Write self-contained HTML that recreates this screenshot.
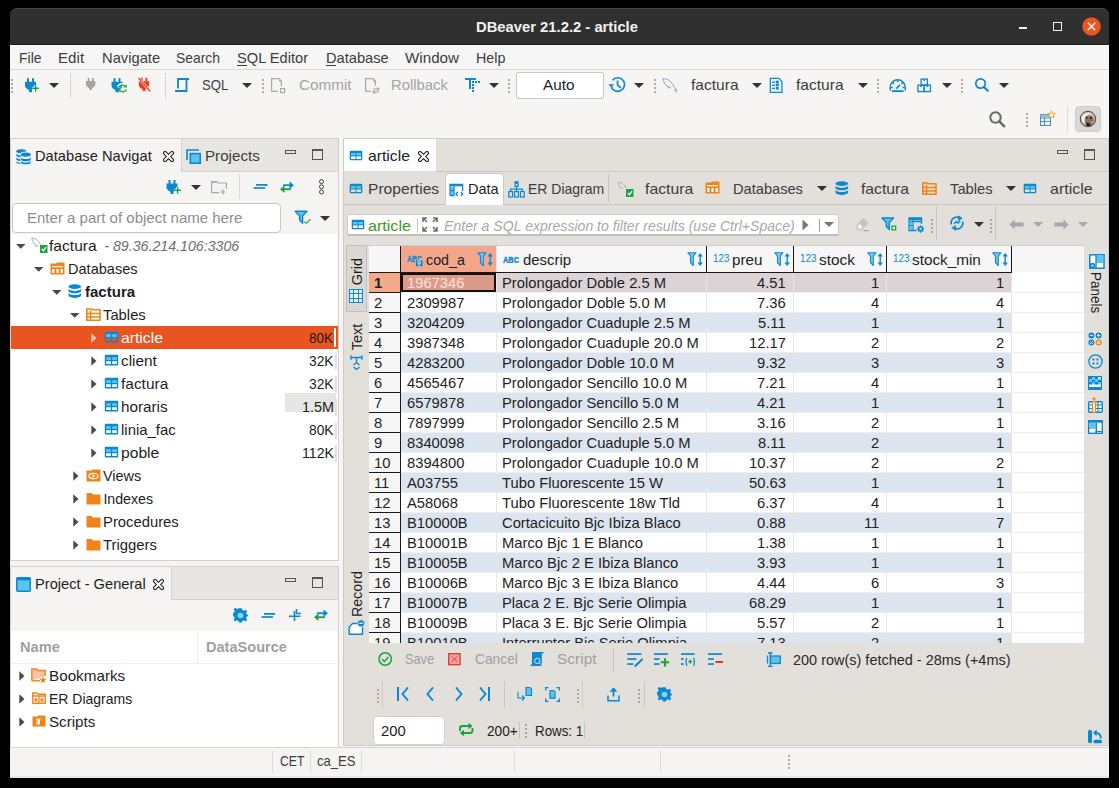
<!DOCTYPE html>
<html><head><meta charset="utf-8"><title>DBeaver</title>
<style>
html,body{margin:0;padding:0;}
body{width:1119px;height:788px;background:#000;position:relative;overflow:hidden;font-family:"Liberation Sans",sans-serif;}
.a{position:absolute;}
.t{position:absolute;white-space:nowrap;line-height:0;transform-origin:0 0;}
</style></head><body>
<div class="a" style="left:10px;top:44px;width:1099px;height:734px;background:#f6f5f4;"></div>
<div class="a" style="left:10px;top:8px;width:1099px;height:37px;background:#313030;border-radius:7px 7px 0 0;border-top:1px solid #4a4a4a;box-sizing:border-box;"></div>
<div class="a" style="left:10px;top:44px;width:1099px;height:1px;background:#1c1c1c;"></div>
<div class="a" style="left:10px;top:45px;width:1099px;height:1px;background:#ffffff;"></div>
<div class="t" style="left:475.70px;top:26.88px;font-size:14.2px;color:#f2f2f2;font-weight:bold;transform:scaleX(1.0424);">DBeaver 21.2.2 - article</div>
<div class="a" style="left:1019px;top:27px;width:8px;height:2px;background:#f0f0f0;"></div>
<div class="a" style="left:1053px;top:22px;width:8px;height:8px;background:transparent;border:1.5px solid #f0f0f0;box-sizing:border-box;width:9px;height:9px;"></div>
<svg class="a" style="left:1082px;top:17px;" width="19" height="19" viewBox="0 0 19 19"><circle cx="9.5" cy="9.5" r="9.3" fill="#e95420"/><path d="M5.8 5.8L13.2 13.2M13.2 5.8L5.8 13.2" stroke="#fff" stroke-width="1.4"/></svg>
<div class="a" style="left:10px;top:46px;width:1099px;height:23px;background:#f6f6f6;"></div>
<div class="a" style="left:10px;top:69px;width:1099px;height:1px;background:#dad9d7;"></div>
<div class="t" style="left:18.80px;top:58.08px;font-size:14.2px;color:#3d3d3d;transform:scaleX(0.9879);">File</div>
<div class="t" style="left:58.30px;top:58.08px;font-size:14.2px;color:#3d3d3d;transform:scaleX(1.0668);">Edit</div>
<div class="t" style="left:101.80px;top:58.08px;font-size:14.2px;color:#3d3d3d;transform:scaleX(1.0384);">Navigate</div>
<div class="t" style="left:176.30px;top:58.08px;font-size:14.2px;color:#3d3d3d;transform:scaleX(0.9781);">Search</div>
<div class="t" style="left:236.50px;top:58.08px;font-size:14.2px;color:#3d3d3d;transform:scaleX(1.0315);">SQL Editor</div>
<div class="a" style="left:237px;top:65px;width:10px;height:1px;background:#3d3d3d;"></div>
<div class="t" style="left:325.50px;top:58.08px;font-size:14.2px;color:#3d3d3d;transform:scaleX(1.0331);">Database</div>
<div class="a" style="left:326px;top:65px;width:10px;height:1px;background:#3d3d3d;"></div>
<div class="t" style="left:405.30px;top:58.08px;font-size:14.2px;color:#3d3d3d;transform:scaleX(1.0705);">Window</div>
<div class="t" style="left:475.70px;top:58.08px;font-size:14.2px;color:#3d3d3d;transform:scaleX(1.0065);">Help</div>
<div class="a" style="left:10px;top:70px;width:1099px;height:68px;background:#f6f5f4;"></div>
<div class="t" style="left:201.90px;top:85.48px;font-size:14.2px;color:#3d3d3d;transform:scaleX(0.9256);">SQL</div>
<div class="t" style="left:298.70px;top:85.48px;font-size:14.2px;color:#a3a3a3;transform:scaleX(1.0756);">Commit</div>
<div class="t" style="left:391.40px;top:85.48px;font-size:14.2px;color:#a3a3a3;transform:scaleX(1.0443);">Rollback</div>
<div class="a" style="left:516px;top:72px;width:88px;height:27px;background:#ffffff;border:1px solid #c9c6c3;box-sizing:border-box;border-radius:2px;"></div>
<div class="t" style="left:542.50px;top:85.48px;font-size:14.2px;color:#1e1e1e;transform:scaleX(1.0750);">Auto</div>
<div class="t" style="left:690.60px;top:85.48px;font-size:14.2px;color:#3d3d3d;transform:scaleX(1.0985);">factura</div>
<div class="t" style="left:796.30px;top:85.48px;font-size:14.2px;color:#3d3d3d;transform:scaleX(1.0985);">factura</div>
<div class="a" style="left:10px;top:138px;width:329px;height:423px;background:#f5f4f2;border:1px solid #d5d0cb;box-sizing:border-box;"></div>
<div class="a" style="left:181px;top:139px;width:157px;height:32px;background:#e8e6e3;"></div>
<div class="a" style="left:181px;top:171px;width:157px;height:1px;background:#d5d0cb;"></div>
<div class="a" style="left:181px;top:139px;width:1px;height:32px;background:#d5d0cb;"></div>
<div class="t" style="left:35.40px;top:156.48px;font-size:14.2px;color:#1e1e1e;transform:scaleX(1.0348);">Database Navigat</div>
<div class="t" style="left:205.20px;top:156.48px;font-size:14.2px;color:#3d3d3d;transform:scaleX(1.0684);">Projects</div>
<div class="a" style="left:12px;top:203px;width:269px;height:30px;background:#ffffff;border:1px solid #cdc7c2;box-sizing:border-box;border-radius:4px;"></div>
<div class="t" style="left:26.50px;top:218.08px;font-size:14.2px;color:#8d8d8d;transform:scaleX(1.0582);">Enter a part of object name here</div>
<div class="a" style="left:11px;top:234px;width:327px;height:326px;background:#ffffff;"></div>
<div class="t" style="left:49.00px;top:245.58px;font-size:14.2px;color:#1e1e1e;transform:scaleX(1.1008);">factura</div>
<div class="t" style="left:104.30px;top:245.58px;font-size:14.2px;color:#6e6e6e;font-style:italic;">- 89.36.214.106:3306</div>
<div class="t" style="left:67.50px;top:268.58px;font-size:14.2px;color:#1e1e1e;transform:scaleX(1.0267);">Databases</div>
<div class="t" style="left:85.40px;top:291.58px;font-size:14.2px;color:#1e1e1e;font-weight:bold;transform:scaleX(1.0602);">factura</div>
<div class="t" style="left:103.40px;top:314.58px;font-size:14.2px;color:#1e1e1e;transform:scaleX(1.0426);">Tables</div>
<div class="a" style="left:11px;top:326px;width:327px;height:23px;background:#e95420;"></div>
<div class="t" style="left:121.40px;top:337.58px;font-size:14.2px;color:#ffffff;transform:scaleX(1.1060);">article</div>
<div class="t" style="left:309.40px;top:337.58px;font-size:14.2px;color:#1e1e1e;transform:scaleX(0.9501);">80K</div>
<div class="t" style="left:121.40px;top:360.58px;font-size:14.2px;color:#1e1e1e;transform:scaleX(1.0832);">client</div>
<div class="t" style="left:309.40px;top:360.58px;font-size:14.2px;color:#1e1e1e;transform:scaleX(0.9738);">32K</div>
<div class="t" style="left:121.40px;top:383.58px;font-size:14.2px;color:#1e1e1e;transform:scaleX(1.0893);">factura</div>
<div class="t" style="left:309.40px;top:383.58px;font-size:14.2px;color:#1e1e1e;transform:scaleX(0.9738);">32K</div>
<div class="a" style="left:285px;top:392.5px;width:51px;height:19px;background:#e8e6e4;"></div>
<div class="t" style="left:121.40px;top:406.58px;font-size:14.2px;color:#1e1e1e;transform:scaleX(1.0735);">horaris</div>
<div class="t" style="left:302.00px;top:406.58px;font-size:14.2px;color:#1e1e1e;transform:scaleX(1.0137);">1.5M</div>
<div class="t" style="left:121.40px;top:429.58px;font-size:14.2px;color:#1e1e1e;transform:scaleX(1.0518);">linia_fac</div>
<div class="t" style="left:309.40px;top:429.58px;font-size:14.2px;color:#1e1e1e;transform:scaleX(0.9738);">80K</div>
<div class="t" style="left:121.40px;top:452.58px;font-size:14.2px;color:#1e1e1e;transform:scaleX(1.1022);">poble</div>
<div class="t" style="left:302.00px;top:452.58px;font-size:14.2px;color:#1e1e1e;transform:scaleX(0.9967);">112K</div>
<div class="t" style="left:103.40px;top:475.58px;font-size:14.2px;color:#1e1e1e;transform:scaleX(1.0182);">Views</div>
<div class="t" style="left:103.40px;top:498.58px;font-size:14.2px;color:#1e1e1e;">Indexes</div>
<div class="t" style="left:103.40px;top:521.58px;font-size:14.2px;color:#1e1e1e;transform:scaleX(1.0438);">Procedures</div>
<div class="t" style="left:103.40px;top:544.58px;font-size:14.2px;color:#1e1e1e;transform:scaleX(1.0457);">Triggers</div>
<div class="a" style="left:10px;top:566px;width:329px;height:182px;background:#f5f4f2;border:1px solid #d5d0cb;box-sizing:border-box;"></div>
<div class="a" style="left:171px;top:567px;width:167px;height:32px;background:#e8e6e3;"></div>
<div class="a" style="left:171px;top:599px;width:167px;height:1px;background:#d5d0cb;"></div>
<div class="a" style="left:171px;top:567px;width:1px;height:32px;background:#d5d0cb;"></div>
<div class="t" style="left:35.40px;top:584.48px;font-size:14.2px;color:#1e1e1e;transform:scaleX(1.0323);">Project - General</div>
<div class="a" style="left:11px;top:631px;width:327px;height:116px;background:#ffffff;"></div>
<div class="a" style="left:11px;top:663px;width:327px;height:1px;background:#efefef;"></div>
<div class="a" style="left:197px;top:631px;width:1px;height:32px;background:#efefef;"></div>
<div class="t" style="left:19.60px;top:646.78px;font-size:14.2px;color:#a0a0a0;font-weight:bold;transform:scaleX(1.0289);">Name</div>
<div class="t" style="left:206.00px;top:646.78px;font-size:14.2px;color:#a0a0a0;font-weight:bold;transform:scaleX(1.0263);">DataSource</div>
<div class="t" style="left:49.00px;top:676.08px;font-size:14.2px;color:#1e1e1e;transform:scaleX(1.0742);">Bookmarks</div>
<div class="t" style="left:49.00px;top:699.08px;font-size:14.2px;color:#1e1e1e;transform:scaleX(0.9854);">ER Diagrams</div>
<div class="t" style="left:49.00px;top:722.08px;font-size:14.2px;color:#1e1e1e;transform:scaleX(1.0669);">Scripts</div>
<div class="a" style="left:10px;top:747px;width:1099px;height:31px;background:#f5f4f2;"></div>
<div class="a" style="left:10px;top:747px;width:1099px;height:1px;background:#d8d3cf;"></div>
<div class="a" style="left:10px;top:776px;width:1099px;height:2px;background:#e9e6e3;"></div>
<div class="a" style="left:272px;top:751px;width:1px;height:22px;background:#dedad6;"></div>
<div class="a" style="left:310px;top:751px;width:1px;height:22px;background:#dedad6;"></div>
<div class="a" style="left:361px;top:751px;width:1px;height:22px;background:#dedad6;"></div>
<div class="a" style="left:514px;top:751px;width:1px;height:22px;background:#dedad6;"></div>
<div class="a" style="left:660px;top:751px;width:1px;height:22px;background:#dedad6;"></div>
<div class="a" style="left:788px;top:755px;width:2px;height:2px;background:#b3aba2;"></div>
<div class="a" style="left:788px;top:759px;width:2px;height:2px;background:#b3aba2;"></div>
<div class="a" style="left:788px;top:763px;width:2px;height:2px;background:#b3aba2;"></div>
<div class="a" style="left:788px;top:767px;width:2px;height:2px;background:#b3aba2;"></div>
<div class="t" style="left:279.50px;top:761.08px;font-size:14.2px;color:#3d3d3d;transform:scaleX(0.8627);">CET</div>
<div class="t" style="left:316.50px;top:761.08px;font-size:14.2px;color:#3d3d3d;transform:scaleX(0.9203);">ca_ES</div>
<div class="a" style="left:343px;top:138px;width:766px;height:608px;background:#e3dfdb;border:1px solid #d0cbc6;box-sizing:border-box;"></div>
<div class="a" style="left:344px;top:139px;width:92px;height:32px;background:#ffffff;"></div>
<div class="a" style="left:436px;top:171px;width:672px;height:1px;background:#cdc8c3;"></div>
<div class="t" style="left:368.00px;top:156.48px;font-size:14.2px;color:#1e1e1e;transform:scaleX(1.1086);">article</div>
<div class="a" style="left:344px;top:204px;width:764px;height:1px;background:#c9c4bf;"></div>
<div class="a" style="left:444.5px;top:172.5px;width:59px;height:32px;background:#ffffff;border:1px solid #cdc8c3;border-bottom:none;border-radius:4px 4px 0 0;box-sizing:border-box;"></div>
<div class="a" style="left:608px;top:174px;width:1px;height:28px;background:#c9c4bf;"></div>
<div class="t" style="left:368.00px;top:189.28px;font-size:14.2px;color:#3d3d3d;transform:scaleX(1.1001);">Properties</div>
<div class="t" style="left:468.00px;top:189.28px;font-size:14.2px;color:#1e1e1e;transform:scaleX(1.0232);">Data</div>
<div class="t" style="left:527.70px;top:189.28px;font-size:14.2px;color:#3d3d3d;transform:scaleX(0.9866);">ER Diagram</div>
<div class="t" style="left:645.00px;top:189.28px;font-size:14.2px;color:#3d3d3d;transform:scaleX(1.1123);">factura</div>
<div class="t" style="left:733.40px;top:189.28px;font-size:14.2px;color:#3d3d3d;transform:scaleX(1.0311);">Databases</div>
<div class="t" style="left:861.20px;top:189.28px;font-size:14.2px;color:#3d3d3d;transform:scaleX(1.1077);">factura</div>
<div class="t" style="left:949.50px;top:189.28px;font-size:14.2px;color:#3d3d3d;transform:scaleX(1.0401);">Tables</div>
<div class="t" style="left:1050.30px;top:189.28px;font-size:14.2px;color:#3d3d3d;transform:scaleX(1.1271);">article</div>
<div class="a" style="left:347px;top:214px;width:492px;height:22px;background:#ffffff;border:1px solid #d2cdc8;border-bottom:2px solid #c3beb9;box-sizing:border-box;"></div>
<div class="t" style="left:368.00px;top:226.08px;font-size:14.2px;color:#3b9a1d;transform:scaleX(1.1350);">article</div>
<div class="a" style="left:417px;top:219px;width:1px;height:14px;background:#c9c4bf;"></div>
<div class="t" style="left:444.00px;top:226.08px;font-size:14.2px;color:#a9a9a9;font-style:italic;transform:scaleX(0.9923);">Enter a SQL expression to filter results (use Ctrl+Space)</div>
<div class="a" style="left:819px;top:219px;width:1px;height:13px;background:#a0a0a0;"></div>
<div class="a" style="left:369px;top:245px;width:715px;height:398px;background:#ffffff;"></div>
<div class="a" style="left:369px;top:245px;width:715px;height:27px;background:#f6f6f6;"></div>
<div class="a" style="left:369px;top:245px;width:715px;height:1px;background:#cfcfcf;"></div>
<div class="a" style="left:401px;top:246px;width:95px;height:26px;background:#f2a68c;"></div>
<div class="a" style="left:369px;top:272px;width:642px;height:1px;background:#1a1a1a;"></div>
<div class="a" style="left:400px;top:246px;width:1px;height:27px;background:#1a1a1a;"></div>
<div class="a" style="left:706px;top:246px;width:1px;height:27px;background:#1a1a1a;"></div>
<div class="a" style="left:793px;top:246px;width:1px;height:27px;background:#1a1a1a;"></div>
<div class="a" style="left:886px;top:246px;width:1px;height:27px;background:#1a1a1a;"></div>
<div class="a" style="left:1011px;top:246px;width:1px;height:27px;background:#1a1a1a;"></div>
<div class="a" style="left:496px;top:246px;width:1px;height:26px;background:#e2e2e2;"></div>
<div class="t" style="left:426.30px;top:260.08px;font-size:14.2px;color:#1e1e1e;transform:scaleX(1.0079);">cod_a</div>
<div class="t" style="left:522.70px;top:260.08px;font-size:14.2px;color:#1e1e1e;transform:scaleX(1.0528);">descrip</div>
<div class="t" style="left:732.40px;top:260.08px;font-size:14.2px;color:#1e1e1e;transform:scaleX(1.0734);">preu</div>
<div class="t" style="left:819.00px;top:260.08px;font-size:14.2px;color:#1e1e1e;transform:scaleX(1.0823);">stock</div>
<div class="t" style="left:912.00px;top:260.08px;font-size:14.2px;color:#1e1e1e;transform:scaleX(1.0780);">stock_min</div>
<div class="a" style="left:369px;top:273px;width:715px;height:370px;overflow:hidden">
<div class="a" style="left:0px;top:0px;width:31px;height:19px;background:#f4a98b;"></div>
<div class="a" style="left:32px;top:0px;width:95px;height:19px;background:#dc9a8a;"></div>
<div class="a" style="left:128px;top:0px;width:514px;height:19px;background:#dcd3d6;"></div>
<div class="a" style="left:0px;top:19px;width:31px;height:1px;background:#1a1a1a;"></div>
<div class="a" style="left:32px;top:19px;width:611px;height:1px;background:#efefef;"></div>
<div class="a" style="left:642px;top:19px;width:73px;height:1px;background:#ececec;"></div>
<div class="a" style="left:127px;top:0px;width:1px;height:20px;background:#e6e6e6;"></div>
<div class="a" style="left:337px;top:0px;width:1px;height:20px;background:#e6e6e6;"></div>
<div class="a" style="left:424px;top:0px;width:1px;height:20px;background:#e6e6e6;"></div>
<div class="a" style="left:517px;top:0px;width:1px;height:20px;background:#e6e6e6;"></div>
<div class="a" style="left:642px;top:0px;width:1px;height:20px;background:#e6e6e6;"></div>
<div class="a" style="left:31px;top:0px;width:1px;height:20px;background:#1a1a1a;"></div>
<div class="t" style="left:4.60px;top:9.58px;font-size:14.2px;color:#1e1e1e;font-weight:bold;transform:scaleX(1.0400);">1</div>
<div class="t" style="left:37.50px;top:9.58px;font-size:14.2px;color:#fbe3d8;transform:scaleX(1.0400);">1967346</div>
<div class="t" style="left:133.30px;top:9.58px;font-size:14.2px;color:#1e1e1e;transform:scaleX(1.0400);">Prolongador Doble 2.5 M</div>
<div class="t" style="left:388.26px;top:9.58px;font-size:14.2px;color:#1e1e1e;transform:scaleX(1.0400);">4.51</div>
<div class="t" style="left:501.79px;top:9.58px;font-size:14.2px;color:#1e1e1e;transform:scaleX(1.0400);">1</div>
<div class="t" style="left:627.29px;top:9.58px;font-size:14.2px;color:#1e1e1e;transform:scaleX(1.0400);">1</div>
<div class="a" style="left:0px;top:20px;width:31px;height:19px;background:#f6f6f6;"></div>
<div class="a" style="left:0px;top:39px;width:31px;height:1px;background:#1a1a1a;"></div>
<div class="a" style="left:32px;top:39px;width:611px;height:1px;background:#efefef;"></div>
<div class="a" style="left:642px;top:39px;width:73px;height:1px;background:#ececec;"></div>
<div class="a" style="left:127px;top:20px;width:1px;height:20px;background:#e6e6e6;"></div>
<div class="a" style="left:337px;top:20px;width:1px;height:20px;background:#e6e6e6;"></div>
<div class="a" style="left:424px;top:20px;width:1px;height:20px;background:#e6e6e6;"></div>
<div class="a" style="left:517px;top:20px;width:1px;height:20px;background:#e6e6e6;"></div>
<div class="a" style="left:642px;top:20px;width:1px;height:20px;background:#e6e6e6;"></div>
<div class="a" style="left:31px;top:20px;width:1px;height:20px;background:#1a1a1a;"></div>
<div class="t" style="left:4.60px;top:29.58px;font-size:14.2px;color:#1e1e1e;transform:scaleX(1.0400);">2</div>
<div class="t" style="left:37.50px;top:29.58px;font-size:14.2px;color:#1e1e1e;transform:scaleX(1.0400);">2309987</div>
<div class="t" style="left:133.30px;top:29.58px;font-size:14.2px;color:#1e1e1e;transform:scaleX(1.0400);">Prolongador Doble 5.0 M</div>
<div class="t" style="left:388.26px;top:29.58px;font-size:14.2px;color:#1e1e1e;transform:scaleX(1.0400);">7.36</div>
<div class="t" style="left:501.79px;top:29.58px;font-size:14.2px;color:#1e1e1e;transform:scaleX(1.0400);">4</div>
<div class="t" style="left:627.29px;top:29.58px;font-size:14.2px;color:#1e1e1e;transform:scaleX(1.0400);">4</div>
<div class="a" style="left:32px;top:40px;width:610px;height:19px;background:#dce4ef;"></div>
<div class="a" style="left:0px;top:40px;width:31px;height:19px;background:#f6f6f6;"></div>
<div class="a" style="left:0px;top:59px;width:31px;height:1px;background:#1a1a1a;"></div>
<div class="a" style="left:32px;top:59px;width:611px;height:1px;background:#efefef;"></div>
<div class="a" style="left:642px;top:59px;width:73px;height:1px;background:#ececec;"></div>
<div class="a" style="left:127px;top:40px;width:1px;height:20px;background:#e6e6e6;"></div>
<div class="a" style="left:337px;top:40px;width:1px;height:20px;background:#e6e6e6;"></div>
<div class="a" style="left:424px;top:40px;width:1px;height:20px;background:#e6e6e6;"></div>
<div class="a" style="left:517px;top:40px;width:1px;height:20px;background:#e6e6e6;"></div>
<div class="a" style="left:642px;top:40px;width:1px;height:20px;background:#e6e6e6;"></div>
<div class="a" style="left:31px;top:40px;width:1px;height:20px;background:#1a1a1a;"></div>
<div class="t" style="left:4.60px;top:49.58px;font-size:14.2px;color:#1e1e1e;transform:scaleX(1.0400);">3</div>
<div class="t" style="left:37.50px;top:49.58px;font-size:14.2px;color:#1e1e1e;transform:scaleX(1.0400);">3204209</div>
<div class="t" style="left:133.30px;top:49.58px;font-size:14.2px;color:#1e1e1e;transform:scaleX(1.0400);">Prolongador Cuaduple 2.5 M</div>
<div class="t" style="left:389.35px;top:49.58px;font-size:14.2px;color:#1e1e1e;transform:scaleX(1.0400);">5.11</div>
<div class="t" style="left:501.79px;top:49.58px;font-size:14.2px;color:#1e1e1e;transform:scaleX(1.0400);">1</div>
<div class="t" style="left:627.29px;top:49.58px;font-size:14.2px;color:#1e1e1e;transform:scaleX(1.0400);">1</div>
<div class="a" style="left:0px;top:60px;width:31px;height:19px;background:#f6f6f6;"></div>
<div class="a" style="left:0px;top:79px;width:31px;height:1px;background:#1a1a1a;"></div>
<div class="a" style="left:32px;top:79px;width:611px;height:1px;background:#efefef;"></div>
<div class="a" style="left:642px;top:79px;width:73px;height:1px;background:#ececec;"></div>
<div class="a" style="left:127px;top:60px;width:1px;height:20px;background:#e6e6e6;"></div>
<div class="a" style="left:337px;top:60px;width:1px;height:20px;background:#e6e6e6;"></div>
<div class="a" style="left:424px;top:60px;width:1px;height:20px;background:#e6e6e6;"></div>
<div class="a" style="left:517px;top:60px;width:1px;height:20px;background:#e6e6e6;"></div>
<div class="a" style="left:642px;top:60px;width:1px;height:20px;background:#e6e6e6;"></div>
<div class="a" style="left:31px;top:60px;width:1px;height:20px;background:#1a1a1a;"></div>
<div class="t" style="left:4.60px;top:69.58px;font-size:14.2px;color:#1e1e1e;transform:scaleX(1.0400);">4</div>
<div class="t" style="left:37.50px;top:69.58px;font-size:14.2px;color:#1e1e1e;transform:scaleX(1.0400);">3987348</div>
<div class="t" style="left:133.30px;top:69.58px;font-size:14.2px;color:#1e1e1e;transform:scaleX(1.0400);">Prolongador Cuaduple 20.0 M</div>
<div class="t" style="left:380.05px;top:69.58px;font-size:14.2px;color:#1e1e1e;transform:scaleX(1.0400);">12.17</div>
<div class="t" style="left:501.79px;top:69.58px;font-size:14.2px;color:#1e1e1e;transform:scaleX(1.0400);">2</div>
<div class="t" style="left:627.29px;top:69.58px;font-size:14.2px;color:#1e1e1e;transform:scaleX(1.0400);">2</div>
<div class="a" style="left:32px;top:80px;width:610px;height:19px;background:#dce4ef;"></div>
<div class="a" style="left:0px;top:80px;width:31px;height:19px;background:#f6f6f6;"></div>
<div class="a" style="left:0px;top:99px;width:31px;height:1px;background:#1a1a1a;"></div>
<div class="a" style="left:32px;top:99px;width:611px;height:1px;background:#efefef;"></div>
<div class="a" style="left:642px;top:99px;width:73px;height:1px;background:#ececec;"></div>
<div class="a" style="left:127px;top:80px;width:1px;height:20px;background:#e6e6e6;"></div>
<div class="a" style="left:337px;top:80px;width:1px;height:20px;background:#e6e6e6;"></div>
<div class="a" style="left:424px;top:80px;width:1px;height:20px;background:#e6e6e6;"></div>
<div class="a" style="left:517px;top:80px;width:1px;height:20px;background:#e6e6e6;"></div>
<div class="a" style="left:642px;top:80px;width:1px;height:20px;background:#e6e6e6;"></div>
<div class="a" style="left:31px;top:80px;width:1px;height:20px;background:#1a1a1a;"></div>
<div class="t" style="left:4.60px;top:89.58px;font-size:14.2px;color:#1e1e1e;transform:scaleX(1.0400);">5</div>
<div class="t" style="left:37.50px;top:89.58px;font-size:14.2px;color:#1e1e1e;transform:scaleX(1.0400);">4283200</div>
<div class="t" style="left:133.30px;top:89.58px;font-size:14.2px;color:#1e1e1e;transform:scaleX(1.0400);">Prolongador Doble 10.0 M</div>
<div class="t" style="left:388.26px;top:89.58px;font-size:14.2px;color:#1e1e1e;transform:scaleX(1.0400);">9.32</div>
<div class="t" style="left:501.79px;top:89.58px;font-size:14.2px;color:#1e1e1e;transform:scaleX(1.0400);">3</div>
<div class="t" style="left:627.29px;top:89.58px;font-size:14.2px;color:#1e1e1e;transform:scaleX(1.0400);">3</div>
<div class="a" style="left:0px;top:100px;width:31px;height:19px;background:#f6f6f6;"></div>
<div class="a" style="left:0px;top:119px;width:31px;height:1px;background:#1a1a1a;"></div>
<div class="a" style="left:32px;top:119px;width:611px;height:1px;background:#efefef;"></div>
<div class="a" style="left:642px;top:119px;width:73px;height:1px;background:#ececec;"></div>
<div class="a" style="left:127px;top:100px;width:1px;height:20px;background:#e6e6e6;"></div>
<div class="a" style="left:337px;top:100px;width:1px;height:20px;background:#e6e6e6;"></div>
<div class="a" style="left:424px;top:100px;width:1px;height:20px;background:#e6e6e6;"></div>
<div class="a" style="left:517px;top:100px;width:1px;height:20px;background:#e6e6e6;"></div>
<div class="a" style="left:642px;top:100px;width:1px;height:20px;background:#e6e6e6;"></div>
<div class="a" style="left:31px;top:100px;width:1px;height:20px;background:#1a1a1a;"></div>
<div class="t" style="left:4.60px;top:109.58px;font-size:14.2px;color:#1e1e1e;transform:scaleX(1.0400);">6</div>
<div class="t" style="left:37.50px;top:109.58px;font-size:14.2px;color:#1e1e1e;transform:scaleX(1.0400);">4565467</div>
<div class="t" style="left:133.30px;top:109.58px;font-size:14.2px;color:#1e1e1e;transform:scaleX(1.0400);">Prolongador Sencillo 10.0 M</div>
<div class="t" style="left:388.26px;top:109.58px;font-size:14.2px;color:#1e1e1e;transform:scaleX(1.0400);">7.21</div>
<div class="t" style="left:501.79px;top:109.58px;font-size:14.2px;color:#1e1e1e;transform:scaleX(1.0400);">4</div>
<div class="t" style="left:627.29px;top:109.58px;font-size:14.2px;color:#1e1e1e;transform:scaleX(1.0400);">1</div>
<div class="a" style="left:32px;top:120px;width:610px;height:19px;background:#dce4ef;"></div>
<div class="a" style="left:0px;top:120px;width:31px;height:19px;background:#f6f6f6;"></div>
<div class="a" style="left:0px;top:139px;width:31px;height:1px;background:#1a1a1a;"></div>
<div class="a" style="left:32px;top:139px;width:611px;height:1px;background:#efefef;"></div>
<div class="a" style="left:642px;top:139px;width:73px;height:1px;background:#ececec;"></div>
<div class="a" style="left:127px;top:120px;width:1px;height:20px;background:#e6e6e6;"></div>
<div class="a" style="left:337px;top:120px;width:1px;height:20px;background:#e6e6e6;"></div>
<div class="a" style="left:424px;top:120px;width:1px;height:20px;background:#e6e6e6;"></div>
<div class="a" style="left:517px;top:120px;width:1px;height:20px;background:#e6e6e6;"></div>
<div class="a" style="left:642px;top:120px;width:1px;height:20px;background:#e6e6e6;"></div>
<div class="a" style="left:31px;top:120px;width:1px;height:20px;background:#1a1a1a;"></div>
<div class="t" style="left:4.60px;top:129.58px;font-size:14.2px;color:#1e1e1e;transform:scaleX(1.0400);">7</div>
<div class="t" style="left:37.50px;top:129.58px;font-size:14.2px;color:#1e1e1e;transform:scaleX(1.0400);">6579878</div>
<div class="t" style="left:133.30px;top:129.58px;font-size:14.2px;color:#1e1e1e;transform:scaleX(1.0400);">Prolongador Sencillo 5.0 M</div>
<div class="t" style="left:388.26px;top:129.58px;font-size:14.2px;color:#1e1e1e;transform:scaleX(1.0400);">4.21</div>
<div class="t" style="left:501.79px;top:129.58px;font-size:14.2px;color:#1e1e1e;transform:scaleX(1.0400);">1</div>
<div class="t" style="left:627.29px;top:129.58px;font-size:14.2px;color:#1e1e1e;transform:scaleX(1.0400);">1</div>
<div class="a" style="left:0px;top:140px;width:31px;height:19px;background:#f6f6f6;"></div>
<div class="a" style="left:0px;top:159px;width:31px;height:1px;background:#1a1a1a;"></div>
<div class="a" style="left:32px;top:159px;width:611px;height:1px;background:#efefef;"></div>
<div class="a" style="left:642px;top:159px;width:73px;height:1px;background:#ececec;"></div>
<div class="a" style="left:127px;top:140px;width:1px;height:20px;background:#e6e6e6;"></div>
<div class="a" style="left:337px;top:140px;width:1px;height:20px;background:#e6e6e6;"></div>
<div class="a" style="left:424px;top:140px;width:1px;height:20px;background:#e6e6e6;"></div>
<div class="a" style="left:517px;top:140px;width:1px;height:20px;background:#e6e6e6;"></div>
<div class="a" style="left:642px;top:140px;width:1px;height:20px;background:#e6e6e6;"></div>
<div class="a" style="left:31px;top:140px;width:1px;height:20px;background:#1a1a1a;"></div>
<div class="t" style="left:4.60px;top:149.58px;font-size:14.2px;color:#1e1e1e;transform:scaleX(1.0400);">8</div>
<div class="t" style="left:37.50px;top:149.58px;font-size:14.2px;color:#1e1e1e;transform:scaleX(1.0400);">7897999</div>
<div class="t" style="left:133.30px;top:149.58px;font-size:14.2px;color:#1e1e1e;transform:scaleX(1.0400);">Prolongador Sencillo 2.5 M</div>
<div class="t" style="left:388.26px;top:149.58px;font-size:14.2px;color:#1e1e1e;transform:scaleX(1.0400);">3.16</div>
<div class="t" style="left:501.79px;top:149.58px;font-size:14.2px;color:#1e1e1e;transform:scaleX(1.0400);">2</div>
<div class="t" style="left:627.29px;top:149.58px;font-size:14.2px;color:#1e1e1e;transform:scaleX(1.0400);">1</div>
<div class="a" style="left:32px;top:160px;width:610px;height:19px;background:#dce4ef;"></div>
<div class="a" style="left:0px;top:160px;width:31px;height:19px;background:#f6f6f6;"></div>
<div class="a" style="left:0px;top:179px;width:31px;height:1px;background:#1a1a1a;"></div>
<div class="a" style="left:32px;top:179px;width:611px;height:1px;background:#efefef;"></div>
<div class="a" style="left:642px;top:179px;width:73px;height:1px;background:#ececec;"></div>
<div class="a" style="left:127px;top:160px;width:1px;height:20px;background:#e6e6e6;"></div>
<div class="a" style="left:337px;top:160px;width:1px;height:20px;background:#e6e6e6;"></div>
<div class="a" style="left:424px;top:160px;width:1px;height:20px;background:#e6e6e6;"></div>
<div class="a" style="left:517px;top:160px;width:1px;height:20px;background:#e6e6e6;"></div>
<div class="a" style="left:642px;top:160px;width:1px;height:20px;background:#e6e6e6;"></div>
<div class="a" style="left:31px;top:160px;width:1px;height:20px;background:#1a1a1a;"></div>
<div class="t" style="left:4.60px;top:169.58px;font-size:14.2px;color:#1e1e1e;transform:scaleX(1.0400);">9</div>
<div class="t" style="left:37.50px;top:169.58px;font-size:14.2px;color:#1e1e1e;transform:scaleX(1.0400);">8340098</div>
<div class="t" style="left:133.30px;top:169.58px;font-size:14.2px;color:#1e1e1e;transform:scaleX(1.0400);">Prolongador Cuaduple 5.0 M</div>
<div class="t" style="left:389.35px;top:169.58px;font-size:14.2px;color:#1e1e1e;transform:scaleX(1.0400);">8.11</div>
<div class="t" style="left:501.79px;top:169.58px;font-size:14.2px;color:#1e1e1e;transform:scaleX(1.0400);">2</div>
<div class="t" style="left:627.29px;top:169.58px;font-size:14.2px;color:#1e1e1e;transform:scaleX(1.0400);">1</div>
<div class="a" style="left:0px;top:180px;width:31px;height:19px;background:#f6f6f6;"></div>
<div class="a" style="left:0px;top:199px;width:31px;height:1px;background:#1a1a1a;"></div>
<div class="a" style="left:32px;top:199px;width:611px;height:1px;background:#efefef;"></div>
<div class="a" style="left:642px;top:199px;width:73px;height:1px;background:#ececec;"></div>
<div class="a" style="left:127px;top:180px;width:1px;height:20px;background:#e6e6e6;"></div>
<div class="a" style="left:337px;top:180px;width:1px;height:20px;background:#e6e6e6;"></div>
<div class="a" style="left:424px;top:180px;width:1px;height:20px;background:#e6e6e6;"></div>
<div class="a" style="left:517px;top:180px;width:1px;height:20px;background:#e6e6e6;"></div>
<div class="a" style="left:642px;top:180px;width:1px;height:20px;background:#e6e6e6;"></div>
<div class="a" style="left:31px;top:180px;width:1px;height:20px;background:#1a1a1a;"></div>
<div class="t" style="left:4.60px;top:189.58px;font-size:14.2px;color:#1e1e1e;transform:scaleX(1.0400);">10</div>
<div class="t" style="left:37.50px;top:189.58px;font-size:14.2px;color:#1e1e1e;transform:scaleX(1.0400);">8394800</div>
<div class="t" style="left:133.30px;top:189.58px;font-size:14.2px;color:#1e1e1e;transform:scaleX(1.0400);">Prolongador Cuaduple 10.0 M</div>
<div class="t" style="left:380.05px;top:189.58px;font-size:14.2px;color:#1e1e1e;transform:scaleX(1.0400);">10.37</div>
<div class="t" style="left:501.79px;top:189.58px;font-size:14.2px;color:#1e1e1e;transform:scaleX(1.0400);">2</div>
<div class="t" style="left:627.29px;top:189.58px;font-size:14.2px;color:#1e1e1e;transform:scaleX(1.0400);">2</div>
<div class="a" style="left:32px;top:200px;width:610px;height:19px;background:#dce4ef;"></div>
<div class="a" style="left:0px;top:200px;width:31px;height:19px;background:#f6f6f6;"></div>
<div class="a" style="left:0px;top:219px;width:31px;height:1px;background:#1a1a1a;"></div>
<div class="a" style="left:32px;top:219px;width:611px;height:1px;background:#efefef;"></div>
<div class="a" style="left:642px;top:219px;width:73px;height:1px;background:#ececec;"></div>
<div class="a" style="left:127px;top:200px;width:1px;height:20px;background:#e6e6e6;"></div>
<div class="a" style="left:337px;top:200px;width:1px;height:20px;background:#e6e6e6;"></div>
<div class="a" style="left:424px;top:200px;width:1px;height:20px;background:#e6e6e6;"></div>
<div class="a" style="left:517px;top:200px;width:1px;height:20px;background:#e6e6e6;"></div>
<div class="a" style="left:642px;top:200px;width:1px;height:20px;background:#e6e6e6;"></div>
<div class="a" style="left:31px;top:200px;width:1px;height:20px;background:#1a1a1a;"></div>
<div class="t" style="left:4.60px;top:209.58px;font-size:14.2px;color:#1e1e1e;transform:scaleX(1.0400);">11</div>
<div class="t" style="left:37.50px;top:209.58px;font-size:14.2px;color:#1e1e1e;transform:scaleX(1.0400);">A03755</div>
<div class="t" style="left:133.30px;top:209.58px;font-size:14.2px;color:#1e1e1e;transform:scaleX(1.0400);">Tubo Fluorescente 15 W</div>
<div class="t" style="left:380.05px;top:209.58px;font-size:14.2px;color:#1e1e1e;transform:scaleX(1.0400);">50.63</div>
<div class="t" style="left:501.79px;top:209.58px;font-size:14.2px;color:#1e1e1e;transform:scaleX(1.0400);">1</div>
<div class="t" style="left:627.29px;top:209.58px;font-size:14.2px;color:#1e1e1e;transform:scaleX(1.0400);">1</div>
<div class="a" style="left:0px;top:220px;width:31px;height:19px;background:#f6f6f6;"></div>
<div class="a" style="left:0px;top:239px;width:31px;height:1px;background:#1a1a1a;"></div>
<div class="a" style="left:32px;top:239px;width:611px;height:1px;background:#efefef;"></div>
<div class="a" style="left:642px;top:239px;width:73px;height:1px;background:#ececec;"></div>
<div class="a" style="left:127px;top:220px;width:1px;height:20px;background:#e6e6e6;"></div>
<div class="a" style="left:337px;top:220px;width:1px;height:20px;background:#e6e6e6;"></div>
<div class="a" style="left:424px;top:220px;width:1px;height:20px;background:#e6e6e6;"></div>
<div class="a" style="left:517px;top:220px;width:1px;height:20px;background:#e6e6e6;"></div>
<div class="a" style="left:642px;top:220px;width:1px;height:20px;background:#e6e6e6;"></div>
<div class="a" style="left:31px;top:220px;width:1px;height:20px;background:#1a1a1a;"></div>
<div class="t" style="left:4.60px;top:229.58px;font-size:14.2px;color:#1e1e1e;transform:scaleX(1.0400);">12</div>
<div class="t" style="left:37.50px;top:229.58px;font-size:14.2px;color:#1e1e1e;transform:scaleX(1.0400);">A58068</div>
<div class="t" style="left:133.30px;top:229.58px;font-size:14.2px;color:#1e1e1e;transform:scaleX(1.0400);">Tubo Fluorescente 18w Tld</div>
<div class="t" style="left:388.26px;top:229.58px;font-size:14.2px;color:#1e1e1e;transform:scaleX(1.0400);">6.37</div>
<div class="t" style="left:501.79px;top:229.58px;font-size:14.2px;color:#1e1e1e;transform:scaleX(1.0400);">4</div>
<div class="t" style="left:627.29px;top:229.58px;font-size:14.2px;color:#1e1e1e;transform:scaleX(1.0400);">1</div>
<div class="a" style="left:32px;top:240px;width:610px;height:19px;background:#dce4ef;"></div>
<div class="a" style="left:0px;top:240px;width:31px;height:19px;background:#f6f6f6;"></div>
<div class="a" style="left:0px;top:259px;width:31px;height:1px;background:#1a1a1a;"></div>
<div class="a" style="left:32px;top:259px;width:611px;height:1px;background:#efefef;"></div>
<div class="a" style="left:642px;top:259px;width:73px;height:1px;background:#ececec;"></div>
<div class="a" style="left:127px;top:240px;width:1px;height:20px;background:#e6e6e6;"></div>
<div class="a" style="left:337px;top:240px;width:1px;height:20px;background:#e6e6e6;"></div>
<div class="a" style="left:424px;top:240px;width:1px;height:20px;background:#e6e6e6;"></div>
<div class="a" style="left:517px;top:240px;width:1px;height:20px;background:#e6e6e6;"></div>
<div class="a" style="left:642px;top:240px;width:1px;height:20px;background:#e6e6e6;"></div>
<div class="a" style="left:31px;top:240px;width:1px;height:20px;background:#1a1a1a;"></div>
<div class="t" style="left:4.60px;top:249.58px;font-size:14.2px;color:#1e1e1e;transform:scaleX(1.0400);">13</div>
<div class="t" style="left:37.50px;top:249.58px;font-size:14.2px;color:#1e1e1e;transform:scaleX(1.0400);">B10000B</div>
<div class="t" style="left:133.30px;top:249.58px;font-size:14.2px;color:#1e1e1e;transform:scaleX(1.0400);">Cortacicuito Bjc Ibiza Blaco</div>
<div class="t" style="left:388.26px;top:249.58px;font-size:14.2px;color:#1e1e1e;transform:scaleX(1.0400);">0.88</div>
<div class="t" style="left:494.67px;top:249.58px;font-size:14.2px;color:#1e1e1e;transform:scaleX(1.0400);">11</div>
<div class="t" style="left:627.29px;top:249.58px;font-size:14.2px;color:#1e1e1e;transform:scaleX(1.0400);">7</div>
<div class="a" style="left:0px;top:260px;width:31px;height:19px;background:#f6f6f6;"></div>
<div class="a" style="left:0px;top:279px;width:31px;height:1px;background:#1a1a1a;"></div>
<div class="a" style="left:32px;top:279px;width:611px;height:1px;background:#efefef;"></div>
<div class="a" style="left:642px;top:279px;width:73px;height:1px;background:#ececec;"></div>
<div class="a" style="left:127px;top:260px;width:1px;height:20px;background:#e6e6e6;"></div>
<div class="a" style="left:337px;top:260px;width:1px;height:20px;background:#e6e6e6;"></div>
<div class="a" style="left:424px;top:260px;width:1px;height:20px;background:#e6e6e6;"></div>
<div class="a" style="left:517px;top:260px;width:1px;height:20px;background:#e6e6e6;"></div>
<div class="a" style="left:642px;top:260px;width:1px;height:20px;background:#e6e6e6;"></div>
<div class="a" style="left:31px;top:260px;width:1px;height:20px;background:#1a1a1a;"></div>
<div class="t" style="left:4.60px;top:269.58px;font-size:14.2px;color:#1e1e1e;transform:scaleX(1.0400);">14</div>
<div class="t" style="left:37.50px;top:269.58px;font-size:14.2px;color:#1e1e1e;transform:scaleX(1.0400);">B10001B</div>
<div class="t" style="left:133.30px;top:269.58px;font-size:14.2px;color:#1e1e1e;transform:scaleX(1.0400);">Marco Bjc 1 E Blanco</div>
<div class="t" style="left:388.26px;top:269.58px;font-size:14.2px;color:#1e1e1e;transform:scaleX(1.0400);">1.38</div>
<div class="t" style="left:501.79px;top:269.58px;font-size:14.2px;color:#1e1e1e;transform:scaleX(1.0400);">1</div>
<div class="t" style="left:627.29px;top:269.58px;font-size:14.2px;color:#1e1e1e;transform:scaleX(1.0400);">1</div>
<div class="a" style="left:32px;top:280px;width:610px;height:19px;background:#dce4ef;"></div>
<div class="a" style="left:0px;top:280px;width:31px;height:19px;background:#f6f6f6;"></div>
<div class="a" style="left:0px;top:299px;width:31px;height:1px;background:#1a1a1a;"></div>
<div class="a" style="left:32px;top:299px;width:611px;height:1px;background:#efefef;"></div>
<div class="a" style="left:642px;top:299px;width:73px;height:1px;background:#ececec;"></div>
<div class="a" style="left:127px;top:280px;width:1px;height:20px;background:#e6e6e6;"></div>
<div class="a" style="left:337px;top:280px;width:1px;height:20px;background:#e6e6e6;"></div>
<div class="a" style="left:424px;top:280px;width:1px;height:20px;background:#e6e6e6;"></div>
<div class="a" style="left:517px;top:280px;width:1px;height:20px;background:#e6e6e6;"></div>
<div class="a" style="left:642px;top:280px;width:1px;height:20px;background:#e6e6e6;"></div>
<div class="a" style="left:31px;top:280px;width:1px;height:20px;background:#1a1a1a;"></div>
<div class="t" style="left:4.60px;top:289.58px;font-size:14.2px;color:#1e1e1e;transform:scaleX(1.0400);">15</div>
<div class="t" style="left:37.50px;top:289.58px;font-size:14.2px;color:#1e1e1e;transform:scaleX(1.0400);">B10005B</div>
<div class="t" style="left:133.30px;top:289.58px;font-size:14.2px;color:#1e1e1e;transform:scaleX(1.0400);">Marco Bjc 2 E Ibiza Blanco</div>
<div class="t" style="left:388.26px;top:289.58px;font-size:14.2px;color:#1e1e1e;transform:scaleX(1.0400);">3.93</div>
<div class="t" style="left:501.79px;top:289.58px;font-size:14.2px;color:#1e1e1e;transform:scaleX(1.0400);">1</div>
<div class="t" style="left:627.29px;top:289.58px;font-size:14.2px;color:#1e1e1e;transform:scaleX(1.0400);">1</div>
<div class="a" style="left:0px;top:300px;width:31px;height:19px;background:#f6f6f6;"></div>
<div class="a" style="left:0px;top:319px;width:31px;height:1px;background:#1a1a1a;"></div>
<div class="a" style="left:32px;top:319px;width:611px;height:1px;background:#efefef;"></div>
<div class="a" style="left:642px;top:319px;width:73px;height:1px;background:#ececec;"></div>
<div class="a" style="left:127px;top:300px;width:1px;height:20px;background:#e6e6e6;"></div>
<div class="a" style="left:337px;top:300px;width:1px;height:20px;background:#e6e6e6;"></div>
<div class="a" style="left:424px;top:300px;width:1px;height:20px;background:#e6e6e6;"></div>
<div class="a" style="left:517px;top:300px;width:1px;height:20px;background:#e6e6e6;"></div>
<div class="a" style="left:642px;top:300px;width:1px;height:20px;background:#e6e6e6;"></div>
<div class="a" style="left:31px;top:300px;width:1px;height:20px;background:#1a1a1a;"></div>
<div class="t" style="left:4.60px;top:309.58px;font-size:14.2px;color:#1e1e1e;transform:scaleX(1.0400);">16</div>
<div class="t" style="left:37.50px;top:309.58px;font-size:14.2px;color:#1e1e1e;transform:scaleX(1.0400);">B10006B</div>
<div class="t" style="left:133.30px;top:309.58px;font-size:14.2px;color:#1e1e1e;transform:scaleX(1.0400);">Marco Bjc 3 E Ibiza Blanco</div>
<div class="t" style="left:388.26px;top:309.58px;font-size:14.2px;color:#1e1e1e;transform:scaleX(1.0400);">4.44</div>
<div class="t" style="left:501.79px;top:309.58px;font-size:14.2px;color:#1e1e1e;transform:scaleX(1.0400);">6</div>
<div class="t" style="left:627.29px;top:309.58px;font-size:14.2px;color:#1e1e1e;transform:scaleX(1.0400);">3</div>
<div class="a" style="left:32px;top:320px;width:610px;height:19px;background:#dce4ef;"></div>
<div class="a" style="left:0px;top:320px;width:31px;height:19px;background:#f6f6f6;"></div>
<div class="a" style="left:0px;top:339px;width:31px;height:1px;background:#1a1a1a;"></div>
<div class="a" style="left:32px;top:339px;width:611px;height:1px;background:#efefef;"></div>
<div class="a" style="left:642px;top:339px;width:73px;height:1px;background:#ececec;"></div>
<div class="a" style="left:127px;top:320px;width:1px;height:20px;background:#e6e6e6;"></div>
<div class="a" style="left:337px;top:320px;width:1px;height:20px;background:#e6e6e6;"></div>
<div class="a" style="left:424px;top:320px;width:1px;height:20px;background:#e6e6e6;"></div>
<div class="a" style="left:517px;top:320px;width:1px;height:20px;background:#e6e6e6;"></div>
<div class="a" style="left:642px;top:320px;width:1px;height:20px;background:#e6e6e6;"></div>
<div class="a" style="left:31px;top:320px;width:1px;height:20px;background:#1a1a1a;"></div>
<div class="t" style="left:4.60px;top:329.58px;font-size:14.2px;color:#1e1e1e;transform:scaleX(1.0400);">17</div>
<div class="t" style="left:37.50px;top:329.58px;font-size:14.2px;color:#1e1e1e;transform:scaleX(1.0400);">B10007B</div>
<div class="t" style="left:133.30px;top:329.58px;font-size:14.2px;color:#1e1e1e;transform:scaleX(1.0400);">Placa 2 E. Bjc Serie Olimpia</div>
<div class="t" style="left:380.05px;top:329.58px;font-size:14.2px;color:#1e1e1e;transform:scaleX(1.0400);">68.29</div>
<div class="t" style="left:501.79px;top:329.58px;font-size:14.2px;color:#1e1e1e;transform:scaleX(1.0400);">1</div>
<div class="t" style="left:627.29px;top:329.58px;font-size:14.2px;color:#1e1e1e;transform:scaleX(1.0400);">1</div>
<div class="a" style="left:0px;top:340px;width:31px;height:19px;background:#f6f6f6;"></div>
<div class="a" style="left:0px;top:359px;width:31px;height:1px;background:#1a1a1a;"></div>
<div class="a" style="left:32px;top:359px;width:611px;height:1px;background:#efefef;"></div>
<div class="a" style="left:642px;top:359px;width:73px;height:1px;background:#ececec;"></div>
<div class="a" style="left:127px;top:340px;width:1px;height:20px;background:#e6e6e6;"></div>
<div class="a" style="left:337px;top:340px;width:1px;height:20px;background:#e6e6e6;"></div>
<div class="a" style="left:424px;top:340px;width:1px;height:20px;background:#e6e6e6;"></div>
<div class="a" style="left:517px;top:340px;width:1px;height:20px;background:#e6e6e6;"></div>
<div class="a" style="left:642px;top:340px;width:1px;height:20px;background:#e6e6e6;"></div>
<div class="a" style="left:31px;top:340px;width:1px;height:20px;background:#1a1a1a;"></div>
<div class="t" style="left:4.60px;top:349.58px;font-size:14.2px;color:#1e1e1e;transform:scaleX(1.0400);">18</div>
<div class="t" style="left:37.50px;top:349.58px;font-size:14.2px;color:#1e1e1e;transform:scaleX(1.0400);">B10009B</div>
<div class="t" style="left:133.30px;top:349.58px;font-size:14.2px;color:#1e1e1e;transform:scaleX(1.0400);">Placa 3 E. Bjc Serie Olimpia</div>
<div class="t" style="left:388.26px;top:349.58px;font-size:14.2px;color:#1e1e1e;transform:scaleX(1.0400);">5.57</div>
<div class="t" style="left:501.79px;top:349.58px;font-size:14.2px;color:#1e1e1e;transform:scaleX(1.0400);">2</div>
<div class="t" style="left:627.29px;top:349.58px;font-size:14.2px;color:#1e1e1e;transform:scaleX(1.0400);">1</div>
<div class="a" style="left:32px;top:360px;width:610px;height:19px;background:#dce4ef;"></div>
<div class="a" style="left:0px;top:360px;width:31px;height:19px;background:#f6f6f6;"></div>
<div class="a" style="left:0px;top:379px;width:31px;height:1px;background:#1a1a1a;"></div>
<div class="a" style="left:32px;top:379px;width:611px;height:1px;background:#efefef;"></div>
<div class="a" style="left:642px;top:379px;width:73px;height:1px;background:#ececec;"></div>
<div class="a" style="left:127px;top:360px;width:1px;height:20px;background:#e6e6e6;"></div>
<div class="a" style="left:337px;top:360px;width:1px;height:20px;background:#e6e6e6;"></div>
<div class="a" style="left:424px;top:360px;width:1px;height:20px;background:#e6e6e6;"></div>
<div class="a" style="left:517px;top:360px;width:1px;height:20px;background:#e6e6e6;"></div>
<div class="a" style="left:642px;top:360px;width:1px;height:20px;background:#e6e6e6;"></div>
<div class="a" style="left:31px;top:360px;width:1px;height:20px;background:#1a1a1a;"></div>
<div class="t" style="left:4.60px;top:369.58px;font-size:14.2px;color:#1e1e1e;transform:scaleX(1.0400);">19</div>
<div class="t" style="left:37.50px;top:369.58px;font-size:14.2px;color:#1e1e1e;transform:scaleX(1.0400);">B10010B</div>
<div class="t" style="left:133.30px;top:369.58px;font-size:14.2px;color:#1e1e1e;transform:scaleX(1.0400);">Interruptor Bjc Serie Olimpia</div>
<div class="t" style="left:388.26px;top:369.58px;font-size:14.2px;color:#1e1e1e;transform:scaleX(1.0400);">7.13</div>
<div class="t" style="left:501.79px;top:369.58px;font-size:14.2px;color:#1e1e1e;transform:scaleX(1.0400);">2</div>
<div class="t" style="left:627.29px;top:369.58px;font-size:14.2px;color:#1e1e1e;transform:scaleX(1.0400);">1</div>
<div class="a" style="left:31px;top:0px;width:96px;height:19px;background:transparent;border:2px solid #111;border-left-width:3px;box-sizing:border-box;"></div>
</div>
<div class="a" style="left:346px;top:245px;width:21px;height:67px;background:#dbd7d3;border:1px solid #c4bfba;box-sizing:border-box;"></div>
<div class="a" style="left:357.00px;top:270.60px;width:0;height:0;transform:rotate(-90deg)"><div style="position:absolute;left:-13.75px;top:-0.19px;font-size:14.2px;line-height:0;white-space:nowrap;color:#1e1e1e;transform:scaleX(1.0252);transform-origin:13.75px 0;">Grid</div></div>
<div class="a" style="left:357.00px;top:336.70px;width:0;height:0;transform:rotate(-90deg)"><div style="position:absolute;left:-13.25px;top:-0.19px;font-size:14.2px;line-height:0;white-space:nowrap;color:#1e1e1e;transform:scaleX(1.0176);transform-origin:13.25px 0;">Text</div></div>
<div class="a" style="left:357.00px;top:593.60px;width:0;height:0;transform:rotate(-90deg)"><div style="position:absolute;left:-23.00px;top:-0.19px;font-size:14.2px;line-height:0;white-space:nowrap;color:#1e1e1e;transform:scaleX(1.0048);transform-origin:23.00px 0;">Record</div></div>
<div class="a" style="left:1096.00px;top:292.40px;width:0;height:0;transform:rotate(90deg)"><div style="position:absolute;left:-20.60px;top:-0.19px;font-size:14.2px;line-height:0;white-space:nowrap;color:#1e1e1e;transform:scaleX(0.9488);transform-origin:20.60px 0;">Panels</div></div>
<div class="t" style="left:405.40px;top:659.08px;font-size:14.2px;color:#a0a0a0;transform:scaleX(0.8961);">Save</div>
<div class="t" style="left:475.00px;top:659.08px;font-size:14.2px;color:#a0a0a0;transform:scaleX(0.9705);">Cancel</div>
<div class="t" style="left:557.00px;top:659.08px;font-size:14.2px;color:#a0a0a0;transform:scaleX(1.0938);">Script</div>
<div class="t" style="left:793.30px;top:659.58px;font-size:14.2px;color:#2a2a2a;transform:scaleX(1.0198);">200 row(s) fetched - 28ms (+4ms)</div>
<div class="a" style="left:613px;top:648px;width:1px;height:24px;background:#c9c4bf;"></div>
<div class="a" style="left:373px;top:716px;width:72px;height:29px;background:#ffffff;border:1px solid #d5d0cb;box-sizing:border-box;border-radius:4px;"></div>
<div class="t" style="left:381.25px;top:730.58px;font-size:14.2px;color:#1e1e1e;transform:scaleX(1.0400);">200</div>
<div class="t" style="left:487.30px;top:730.58px;font-size:14.2px;color:#1e1e1e;transform:scaleX(0.9600);">200+</div>
<div class="a" style="left:519px;top:722px;width:1px;height:17px;background:#c9c4bf;"></div>
<div class="t" style="left:535.30px;top:730.58px;font-size:14.2px;color:#1e1e1e;transform:scaleX(0.9397);">Rows: 1</div>
<div class="a" style="left:584px;top:722px;width:1px;height:17px;background:#c9c4bf;"></div>
<div class="a" style="left:382px;top:681px;width:1px;height:27px;background:#cdc8c3;"></div>
<div class="a" style="left:504px;top:681px;width:1px;height:27px;background:#cdc8c3;"></div>
<div class="a" style="left:582px;top:681px;width:1px;height:27px;background:#cdc8c3;"></div>
<div class="a" style="left:644px;top:681px;width:1px;height:27px;background:#cdc8c3;"></div>
<svg class="a" style="left:11px;top:77px;" width="2" height="18" viewBox="0 0 2 18"><rect x="0" y="2" width="2" height="2" fill="#b3aba2"/><rect x="0" y="6" width="2" height="2" fill="#b3aba2"/><rect x="0" y="10" width="2" height="2" fill="#b3aba2"/><rect x="0" y="14" width="2" height="2" fill="#b3aba2"/></svg>
<svg class="a" style="left:24px;top:77px;" width="18" height="16" viewBox="0 0 18 16"><g transform="translate(1,1.2) scale(1.0)" fill="#0b88d2"><rect x="2" y="0" width="2" height="4"/><rect x="7" y="0" width="2" height="4"/><path d="M0 3.5H11V7.5C11 9.5 9 11 7 11.8V14H4V11.8C2 11 0 9.5 0 7.5Z"/></g><path d="M8.2 11.3H15M11.6 7.9V14.8" stroke="#fff" stroke-width="3.2"/><path d="M8.2 11.3H15M11.6 7.9V14.8" stroke="#18a33c" stroke-width="1.4"/></svg>
<svg class="a" style="left:49px;top:83px;" width="10" height="5" viewBox="0 0 10 5"><path d="M0 0H10L5.0 5Z" fill="#333333"/></svg>
<div class="a" style="left:70px;top:73px;width:1px;height:25px;background:#d6d3d0;"></div>
<svg class="a" style="left:86px;top:78px;" width="11" height="14" viewBox="0 0 11 14"><g transform="translate(0,0) scale(0.85)" fill="#a3a3a3"><rect x="2" y="0" width="2" height="4"/><rect x="7" y="0" width="2" height="4"/><path d="M0 3.5H11V7.5C11 9.5 9 11 7 11.8V14H4V11.8C2 11 0 9.5 0 7.5Z"/></g></svg>
<svg class="a" style="left:111px;top:77px;" width="17" height="16" viewBox="0 0 17 16"><g transform="translate(0.5,1.2) scale(1.0)" fill="#0b88d2"><rect x="2" y="0" width="2" height="4"/><rect x="7" y="0" width="2" height="4"/><path d="M0 3.5H11V7.5C11 9.5 9 11 7 11.8V14H4V11.8C2 11 0 9.5 0 7.5Z"/></g><g fill="none" stroke="#fff" stroke-width="3"><path d="M7.5 10.5A4 4 0 0 1 14.5 9"/><path d="M15.5 12.5A4 4 0 0 1 8.5 14"/></g><g fill="none" stroke="#18a33c" stroke-width="1.4"><path d="M7.5 10.5C8.5 8 12 7.5 14 9"/><path d="M15.5 12.5C14.5 15 11 15.5 9 14"/></g><path d="M15.8 7.2V10.6H12.4Z M7.2 15.8V12.4H10.6Z" fill="#18a33c"/></svg>
<svg class="a" style="left:138px;top:77px;" width="13" height="15" viewBox="0 0 13 15"><g transform="translate(0.8,0.8) scale(0.95)" fill="#ee3a1f"><rect x="2" y="0" width="2" height="4"/><rect x="7" y="0" width="2" height="4"/><path d="M0 3.5H11V7.5C11 9.5 9 11 7 11.8V14H4V11.8C2 11 0 9.5 0 7.5Z"/></g><path d="M0.5 1L12.5 14.5" stroke="#fff" stroke-width="2.4"/><path d="M0.5 1L12.5 14.5" stroke="#ee3a1f" stroke-width="1.2"/></svg>
<div class="a" style="left:165px;top:73px;width:1px;height:25px;background:#d6d3d0;"></div>
<svg class="a" style="left:174px;top:77px;" width="16" height="16" viewBox="0 0 16 16"><g fill="none" stroke="#0b88d2" stroke-width="1.8"><path d="M4 11.5V2H15"/><path d="M12.5 2.5V14H1"/></g></svg>
<svg class="a" style="left:242px;top:83px;" width="10" height="5" viewBox="0 0 10 5"><path d="M0 0H10L5.0 5Z" fill="#333333"/></svg>
<svg class="a" style="left:262px;top:77px;" width="2" height="18" viewBox="0 0 2 18"><rect x="0" y="2" width="2" height="2" fill="#b3aba2"/><rect x="0" y="6" width="2" height="2" fill="#b3aba2"/><rect x="0" y="10" width="2" height="2" fill="#b3aba2"/><rect x="0" y="14" width="2" height="2" fill="#b3aba2"/></svg>
<svg class="a" style="left:270px;top:77px;" width="16" height="17" viewBox="0 0 16 17"><g fill="none" stroke="#a8a8a8" stroke-width="1.2"><path d="M1.6 14.4V1.6H9L11.4 4V9.5M1.6 14.4H8"/><rect x="10.6" y="11.6" width="4" height="4"/></g><path d="M9 1.6V4.5H11.6Z" fill="#a8a8a8"/></svg>
<svg class="a" style="left:364px;top:77px;" width="16" height="17" viewBox="0 0 16 17"><g fill="none" stroke="#a8a8a8" stroke-width="1.2"><path d="M1.6 14.4V1.6H9L11.4 4V8.5M1.6 14.4H7"/><path d="M9 12H15M13 10.5L15 12L13 13.5M15 15H9M11 13.5L9 15L11 16.5"/></g><path d="M9 1.6V4.5H11.6Z" fill="#a8a8a8"/></svg>
<svg class="a" style="left:464px;top:77px;" width="17" height="15" viewBox="0 0 17 15"><g fill="#0b88d2"><rect x="1" y="1" width="11" height="2"/><rect x="5" y="1" width="2" height="11"/><rect x="8" y="4" width="2" height="2"/><rect x="11" y="4" width="2" height="2"/><rect x="14" y="4" width="2" height="2"/><rect x="8" y="7" width="2" height="2"/><rect x="8" y="10" width="2" height="2"/><rect x="8" y="13" width="2" height="2"/></g></svg>
<svg class="a" style="left:489px;top:83px;" width="10" height="5" viewBox="0 0 10 5"><path d="M0 0H10L5.0 5Z" fill="#333333"/></svg>
<svg class="a" style="left:508px;top:77px;" width="2" height="18" viewBox="0 0 2 18"><rect x="0" y="2" width="2" height="2" fill="#b3aba2"/><rect x="0" y="6" width="2" height="2" fill="#b3aba2"/><rect x="0" y="10" width="2" height="2" fill="#b3aba2"/><rect x="0" y="14" width="2" height="2" fill="#b3aba2"/></svg>
<svg class="a" style="left:608px;top:76px;" width="18" height="17" viewBox="0 0 18 17"><g fill="none" stroke="#0b88d2" stroke-width="1.7"><path d="M3.2 10.5A6.8 6.8 0 1 0 4.5 4.2"/><path d="M9.5 4.5V8.8L12.8 11.8"/></g><path d="M0.5 8.2H6.2L3.3 11.5Z" fill="#0b88d2"/></svg>
<svg class="a" style="left:634px;top:83px;" width="10" height="5" viewBox="0 0 10 5"><path d="M0 0H10L5.0 5Z" fill="#333333"/></svg>
<svg class="a" style="left:654px;top:77px;" width="2" height="18" viewBox="0 0 2 18"><rect x="0" y="2" width="2" height="2" fill="#b3aba2"/><rect x="0" y="6" width="2" height="2" fill="#b3aba2"/><rect x="0" y="10" width="2" height="2" fill="#b3aba2"/><rect x="0" y="14" width="2" height="2" fill="#b3aba2"/></svg>
<svg class="a" style="left:662px;top:77px;" width="16" height="16" viewBox="0 0 16 16"><g fill="none" stroke="#7fa6c4" stroke-width="0.95" stroke-linecap="round"><path d="M1.2 1.8C5 1.2 9 3.8 11 7.8C12 10 13.3 11.6 14.6 13"/><path d="M14.6 13L12.3 13.2M14.6 13L14.3 15.2"/><path d="M1.2 1.8C1.6 5 3 7.6 5 9C6.2 9.8 7.3 10.1 8.6 10.6"/><path d="M5.5 9.2L6.8 11.3"/></g></svg>
<svg class="a" style="left:752px;top:83px;" width="10" height="5" viewBox="0 0 10 5"><path d="M0 0H10L5.0 5Z" fill="#333333"/></svg>
<svg class="a" style="left:769px;top:77px;" width="15" height="17" viewBox="0 0 15 17"><g fill="none" stroke="#0b88d2" stroke-width="1.3"><path d="M1.3 1.3H9.8L13 4.5V15.3H1.3Z"/></g><g fill="#0b88d2"><rect x="3" y="4.5" width="3" height="1.3"/><rect x="3" y="7.6" width="3" height="1.3"/><rect x="3" y="10.7" width="3" height="1.3"/><rect x="6.8" y="3.7" width="3" height="2.6"/><rect x="6.8" y="6.7" width="3" height="2.6"/><rect x="6.8" y="9.9" width="3" height="2.6"/></g></svg>
<svg class="a" style="left:858px;top:83px;" width="10" height="5" viewBox="0 0 10 5"><path d="M0 0H10L5.0 5Z" fill="#333333"/></svg>
<svg class="a" style="left:877px;top:77px;" width="2" height="18" viewBox="0 0 2 18"><rect x="0" y="2" width="2" height="2" fill="#b3aba2"/><rect x="0" y="6" width="2" height="2" fill="#b3aba2"/><rect x="0" y="10" width="2" height="2" fill="#b3aba2"/><rect x="0" y="14" width="2" height="2" fill="#b3aba2"/></svg>
<svg class="a" style="left:889px;top:78px;" width="18" height="15" viewBox="0 0 18 15"><g fill="none" stroke="#0b88d2" stroke-width="1.5"><path d="M1.2 12.5V9.3A7.5 7.5 0 0 1 16.2 9.3V12.5"/><path d="M8.7 2.3V4.3M3.6 4.6L5 5.9M13.8 4.6L12.4 5.9M1.8 9.5H3.8M15.6 9.5H13.6"/><path d="M7.2 10.6L11 6.8" stroke-width="1.7"/></g><rect x="2.8" y="12.2" width="11.8" height="1.9" fill="#0b88d2"/></svg>
<svg class="a" style="left:917px;top:78px;" width="16" height="15" viewBox="0 0 16 15"><g fill="none" stroke="#0b88d2" stroke-width="1.3"><rect x="4.1" y="1.1" width="6.3" height="6"/><rect x="0.9" y="7.1" width="6.3" height="6.5"/><rect x="7.2" y="7.1" width="6.3" height="6.5"/></g><g fill="#0b88d2"><rect x="6.5" y="1" width="1.5" height="2"/><rect x="3.3" y="7" width="1.5" height="2"/><rect x="9.6" y="7" width="1.5" height="2"/></g></svg>
<svg class="a" style="left:942px;top:83px;" width="10" height="5" viewBox="0 0 10 5"><path d="M0 0H10L5.0 5Z" fill="#333333"/></svg>
<svg class="a" style="left:961px;top:77px;" width="2" height="18" viewBox="0 0 2 18"><rect x="0" y="2" width="2" height="2" fill="#b3aba2"/><rect x="0" y="6" width="2" height="2" fill="#b3aba2"/><rect x="0" y="10" width="2" height="2" fill="#b3aba2"/><rect x="0" y="14" width="2" height="2" fill="#b3aba2"/></svg>
<svg class="a" style="left:974px;top:77px;" width="16" height="16" viewBox="0 0 16 16"><circle cx="6.5" cy="6.5" r="4.7" fill="none" stroke="#0b88d2" stroke-width="1.7"/><path d="M9.8 9.8L13.8 13.8" stroke="#0b88d2" stroke-width="2" stroke-linecap="round"/></svg>
<svg class="a" style="left:999px;top:83px;" width="10" height="5" viewBox="0 0 10 5"><path d="M0 0H10L5.0 5Z" fill="#333333"/></svg>
<svg class="a" style="left:988px;top:110px;" width="19" height="19" viewBox="0 0 19 19"><circle cx="7.5" cy="7.5" r="5.2" fill="none" stroke="#6a6a6a" stroke-width="2"/><path d="M11.3 11.3L16.3 16.3" stroke="#6a6a6a" stroke-width="2.4" stroke-linecap="round"/></svg>
<svg class="a" style="left:1026px;top:111px;" width="2" height="18" viewBox="0 0 2 18"><rect x="0" y="2" width="2" height="2" fill="#b3aba2"/><rect x="0" y="6" width="2" height="2" fill="#b3aba2"/><rect x="0" y="10" width="2" height="2" fill="#b3aba2"/><rect x="0" y="14" width="2" height="2" fill="#b3aba2"/></svg>
<svg class="a" style="left:1039px;top:110px;" width="17" height="18" viewBox="0 0 17 18"><g fill="none" stroke="#4f8fc0" stroke-width="1.1"><rect x="1.5" y="4.5" width="10" height="11"/><path d="M1.5 8H11.5M1.5 11.5H11.5M5.5 4.5V15.5"/></g><rect x="1.5" y="4.5" width="10" height="3" fill="#8fbde0"/><path d="M12.5 0.8L13.6 3.4L16.3 3.6L14.2 5.3L15 8L12.5 6.5L10 8L10.8 5.3L8.7 3.6L11.4 3.4Z" fill="#fff3c4" stroke="#d9a520" stroke-width="0.9"/></svg>
<div class="a" style="left:1067px;top:107px;width:1px;height:25px;background:#dcd9d6;"></div>
<div class="a" style="left:1075px;top:106px;width:26px;height:26px;background:#d8d8d8;border-radius:4px;border:1px solid #cdcdcd;box-sizing:border-box;"></div>
<svg class="a" style="left:1079px;top:110px;" width="18" height="18" viewBox="0 0 18 18"><circle cx="9" cy="9" r="7.7" fill="#cdbdb0" stroke="#3d332d" stroke-width="0.9"/><path d="M2.5 7C4 3 9 1.8 13.5 4C11 3.8 8 4.5 6.5 6.5C5.2 8.5 5.3 11 6 13.5C4 12.5 2.3 10 2.5 7Z" fill="#f4eee8"/><path d="M6.5 7C8 5.3 11.5 5 13.5 6.5C15.5 8.5 15.5 12 13.5 14.5C11.5 16.3 8.5 16.5 6.8 15C5.8 12.5 5.5 9 6.5 7Z" fill="#8c7363"/><path d="M7.5 12.5C9 12 11 13 12 15.5C10.5 16.5 8.5 16.5 7.2 15.6Z" fill="#2f2520"/><circle cx="7.8" cy="7.6" r="0.9" fill="#1d1714"/><circle cx="11.8" cy="8" r="1" fill="#1d1714"/><path d="M12.5 12.5L14 11.5" stroke="#f4eee8" stroke-width="1"/></svg>
<svg class="a" style="left:15.5px;top:148.5px;" width="16" height="16" viewBox="0 0 16 16"><g fill="#0b88d2"><ellipse cx="5.3" cy="2.3" rx="5" ry="2"/><path d="M0.3 4.6Q0.5 6.4 5.3 6.4V8.3Q0.5 8.3 0.3 6.5Z"/><path d="M0.3 8.3Q0.5 10.1 5.3 10.1V12Q0.5 12 0.3 10.2Z"/><path d="M0.3 12Q0.5 13.8 5.3 13.8V15Q0.5 15 0.3 13.6Z"/></g><g fill="#f6f5f4" stroke="#f6f5f4" stroke-width="1.6"><ellipse cx="9.8" cy="5.6" rx="5" ry="2.2"/><path d="M4.8 8Q5 10 9.8 10Q14.6 10 14.8 8V10.2Q14.6 12.2 9.8 12.2Q5 12.2 4.8 10.2Z"/><path d="M4.8 11.6Q5 13.6 9.8 13.6Q14.6 13.6 14.8 11.6V13.2Q14.6 15.2 9.8 15.2Q5 15.2 4.8 13.2Z"/></g><g fill="#0b88d2" stroke="#0b88d2" stroke-width="0"><ellipse cx="9.8" cy="5.6" rx="5" ry="2.2"/><path d="M4.8 8Q5 10 9.8 10Q14.6 10 14.8 8V10.2Q14.6 12.2 9.8 12.2Q5 12.2 4.8 10.2Z"/><path d="M4.8 11.6Q5 13.6 9.8 13.6Q14.6 13.6 14.8 11.6V13.2Q14.6 15.2 9.8 15.2Q5 15.2 4.8 13.2Z"/></g></svg>
<svg class="a" style="left:162.5px;top:150.5px;" width="11" height="11" viewBox="0 0 11 11"><path d="M2 2L9 9M9 2L2 9" stroke="#1a1a1a" stroke-width="3.9" stroke-linecap="round"/><path d="M2 2L9 9M9 2L2 9" stroke="#fff" stroke-width="1.9" stroke-linecap="round"/></svg>
<svg class="a" style="left:185.5px;top:148.5px;" width="15" height="15" viewBox="0 0 15 15"><path d="M1 11V1H13" fill="none" stroke="#0b88d2" stroke-width="1.6"/><rect x="4.3" y="4.6" width="9.9" height="9.6" fill="#5fc4ec" stroke="#0b88d2" stroke-width="1.6"/></svg>
<div class="a" style="left:285px;top:150px;width:11px;height:4px;background:transparent;border:1px solid #555;box-sizing:border-box;"></div>
<div class="a" style="left:312px;top:149px;width:11px;height:11px;background:transparent;border:1px solid #555;border-top:2px solid #555;box-sizing:border-box;"></div>
<svg class="a" style="left:166px;top:179px;" width="16" height="16" viewBox="0 0 16 16"><g transform="translate(0.5,1) scale(1.0)" fill="#0b88d2"><rect x="2" y="0" width="2" height="4"/><rect x="7" y="0" width="2" height="4"/><path d="M0 3.5H11V7.5C11 9.5 9 11 7 11.8V14H4V11.8C2 11 0 9.5 0 7.5Z"/></g><path d="M8.2 11.3H15M11.6 7.9V14.8" stroke="#fff" stroke-width="3"/><path d="M8.2 11.3H15M11.6 7.9V14.8" stroke="#18a33c" stroke-width="1.4"/></svg>
<svg class="a" style="left:191px;top:185px;" width="10" height="5" viewBox="0 0 10 5"><path d="M0 0H10L5.0 5Z" fill="#333333"/></svg>
<svg class="a" style="left:210px;top:179px;" width="18" height="16" viewBox="0 0 18 16"><g fill="none" stroke="#a8a8a8" stroke-width="1.2"><path d="M9 13.6H1.6V2.6H6.5L8 4H16.4V9.5"/><path d="M13 10.5V15.5M10.5 13H15.5"/></g><rect x="1.6" y="2" width="5" height="1.6" fill="#a8a8a8"/></svg>
<div class="a" style="left:239px;top:174px;width:1px;height:25px;background:#dcd9d6;"></div>
<svg class="a" style="left:253px;top:183px;" width="15" height="7" viewBox="0 0 15 7"><g fill="none" stroke="#0b88d2" stroke-width="1.7"><path d="M3 1.8H13.5V3"/><path d="M0.5 5H12"/></g></svg>
<svg class="a" style="left:279px;top:181px;" width="16" height="12" viewBox="0 0 16 12"><path d="M4 4.2H11" stroke="#0b88d2" stroke-width="1.8"/><path d="M10.5 0.5L15 4.2L10.5 8Z" fill="#0b88d2"/><path d="M12 8.2H5" stroke="#18a33c" stroke-width="1.8"/><path d="M5.5 4.5L1 8.2L5.5 12Z" fill="#18a33c"/></svg>
<svg class="a" style="left:318px;top:179px;" width="7" height="16" viewBox="0 0 7 16"><g fill="none" stroke="#444" stroke-width="1"><circle cx="3.5" cy="2.6" r="2"/><circle cx="3.5" cy="7.8" r="2"/><circle cx="3.5" cy="13" r="2"/></g></svg>
<svg class="a" style="left:294px;top:210px;" width="18" height="15" viewBox="0 0 18 15"><path d="M1.2 1.2H13L8.6 5.8V13.2L5.6 10V5.8Z" fill="#5fc4ec" stroke="#0b88d2" stroke-width="1.4" stroke-linejoin="round"/><path d="M10.5 11.5L12.3 13.3L16.5 9.2" fill="none" stroke="#18a33c" stroke-width="1.1"/></svg>
<svg class="a" style="left:320px;top:216px;" width="10" height="5" viewBox="0 0 10 5"><path d="M0 0H10L5.0 5Z" fill="#333333"/></svg>
<svg class="a" style="left:16.3px;top:244px;" width="10" height="5" viewBox="0 0 10 5"><path d="M0 0H9.5L4.75 4.8Z" fill="#4a4a4a"/></svg>
<svg class="a" style="left:31px;top:237px;" width="17" height="17" viewBox="0 0 17 17"><g fill="none" stroke="#8fb1cb" stroke-width="0.95" stroke-linecap="round"><path d="M1 1.2C4 0.8 7.5 3 9.3 7.5"/><path d="M1 1.2C1.3 4 2.5 6.5 4.5 8C5.3 8.6 6 8.8 7 9"/><path d="M4 7.5L5 9.5"/></g><rect x="9" y="8" width="7.5" height="8" fill="#1ea345"/><path d="M10.8 12L12.5 13.8L15 10" fill="none" stroke="#fff" stroke-width="1.3"/></svg>
<svg class="a" style="left:34px;top:267px;" width="10" height="5" viewBox="0 0 10 5"><path d="M0 0H9.5L4.75 4.8Z" fill="#4a4a4a"/></svg>
<svg class="a" style="left:49.5px;top:261.5px;" width="15" height="13" viewBox="0 0 15 13"><path d="M0.5 1.5H6L7 0.5H14.5V12.5H0.5Z" fill="#ef8519"/><g fill="#fff"><rect x="2.2" y="4" width="10.6" height="1.3"/><rect x="2.2" y="7" width="2.2" height="4"/><rect x="6.4" y="7" width="2.2" height="4"/><rect x="10.6" y="7" width="2.2" height="4"/></g></svg>
<svg class="a" style="left:52px;top:290px;" width="10" height="5" viewBox="0 0 10 5"><path d="M0 0H9.5L4.75 4.8Z" fill="#4a4a4a"/></svg>
<svg class="a" style="left:68px;top:283.5px;" width="14" height="15" viewBox="0 0 14 15"><g fill="#0b88d2"><ellipse cx="6.8" cy="2.6" rx="6.3" ry="2.4"/><path d="M0.5 4.8C2 7.6 11.6 7.6 13.1 4.8V7.2C11.6 10 2 10 0.5 7.2Z"/><path d="M0.5 9C2 11.8 11.6 11.8 13.1 9V11.8C11.6 14.6 2 14.6 0.5 11.8Z"/></g></svg>
<svg class="a" style="left:70px;top:313px;" width="10" height="5" viewBox="0 0 10 5"><path d="M0 0H9.5L4.75 4.8Z" fill="#4a4a4a"/></svg>
<svg class="a" style="left:85.5px;top:308px;" width="15" height="13" viewBox="0 0 15 13"><g fill="none" stroke="#ef8519" stroke-width="1.6"><path d="M0.8 12.2V1H5.5L6.5 1.8H14V12.2Z"/><path d="M0.8 5.5H14M0.8 9H14M4.5 2.5V12"/></g></svg>
<svg class="a" style="left:90.8px;top:333px;" width="6" height="10" viewBox="0 0 6 10"><path d="M0.3 0.3L5.5 5L0.3 9.7Z" fill="#f7c7b6"/></svg>
<svg class="a" style="left:103.5px;top:331px;" width="15" height="12" viewBox="0 0 15 12"><rect x="0.8" y="0.8" width="13.4" height="10.6" rx="1" fill="#0b88d2"/><rect x="2.2" y="3.2" width="4.6" height="2.8" fill="#5fc4ec"/><rect x="8.2" y="3.2" width="4.6" height="2.8" fill="#5fc4ec"/><rect x="2.2" y="7.2" width="4.6" height="2.8" fill="#e95420"/><rect x="8.2" y="7.2" width="4.6" height="2.8" fill="#e95420"/></svg>
<div class="a" style="left:333.5px;top:328px;width:2px;height:19px;background:#ffffff;"></div>
<svg class="a" style="left:90.8px;top:356px;" width="6" height="10" viewBox="0 0 6 10"><path d="M0.3 0.3L5.5 5L0.3 9.7Z" fill="#4a4a4a"/></svg>
<svg class="a" style="left:103.5px;top:354px;" width="15" height="12" viewBox="0 0 15 12"><rect x="0.8" y="0.8" width="13.4" height="10.6" rx="1" fill="#0b88d2"/><rect x="2.2" y="3.2" width="4.6" height="2.8" fill="#5fc4ec"/><rect x="8.2" y="3.2" width="4.6" height="2.8" fill="#5fc4ec"/><rect x="2.2" y="7.2" width="4.6" height="2.8" fill="#ffffff"/><rect x="8.2" y="7.2" width="4.6" height="2.8" fill="#ffffff"/></svg>
<div class="a" style="left:335px;top:353px;width:1.5px;height:17px;background:#e0e0e0;"></div>
<svg class="a" style="left:90.8px;top:379px;" width="6" height="10" viewBox="0 0 6 10"><path d="M0.3 0.3L5.5 5L0.3 9.7Z" fill="#4a4a4a"/></svg>
<svg class="a" style="left:103.5px;top:377px;" width="15" height="12" viewBox="0 0 15 12"><rect x="0.8" y="0.8" width="13.4" height="10.6" rx="1" fill="#0b88d2"/><rect x="2.2" y="3.2" width="4.6" height="2.8" fill="#5fc4ec"/><rect x="8.2" y="3.2" width="4.6" height="2.8" fill="#5fc4ec"/><rect x="2.2" y="7.2" width="4.6" height="2.8" fill="#ffffff"/><rect x="8.2" y="7.2" width="4.6" height="2.8" fill="#ffffff"/></svg>
<div class="a" style="left:335px;top:376px;width:1.5px;height:17px;background:#e0e0e0;"></div>
<svg class="a" style="left:90.8px;top:402px;" width="6" height="10" viewBox="0 0 6 10"><path d="M0.3 0.3L5.5 5L0.3 9.7Z" fill="#4a4a4a"/></svg>
<svg class="a" style="left:103.5px;top:400px;" width="15" height="12" viewBox="0 0 15 12"><rect x="0.8" y="0.8" width="13.4" height="10.6" rx="1" fill="#0b88d2"/><rect x="2.2" y="3.2" width="4.6" height="2.8" fill="#5fc4ec"/><rect x="8.2" y="3.2" width="4.6" height="2.8" fill="#5fc4ec"/><rect x="2.2" y="7.2" width="4.6" height="2.8" fill="#ffffff"/><rect x="8.2" y="7.2" width="4.6" height="2.8" fill="#ffffff"/></svg>
<div class="a" style="left:335px;top:399px;width:1.5px;height:17px;background:#e0e0e0;"></div>
<svg class="a" style="left:90.8px;top:425px;" width="6" height="10" viewBox="0 0 6 10"><path d="M0.3 0.3L5.5 5L0.3 9.7Z" fill="#4a4a4a"/></svg>
<svg class="a" style="left:103.5px;top:423px;" width="15" height="12" viewBox="0 0 15 12"><rect x="0.8" y="0.8" width="13.4" height="10.6" rx="1" fill="#0b88d2"/><rect x="2.2" y="3.2" width="4.6" height="2.8" fill="#5fc4ec"/><rect x="8.2" y="3.2" width="4.6" height="2.8" fill="#5fc4ec"/><rect x="2.2" y="7.2" width="4.6" height="2.8" fill="#ffffff"/><rect x="8.2" y="7.2" width="4.6" height="2.8" fill="#ffffff"/></svg>
<div class="a" style="left:335px;top:422px;width:1.5px;height:17px;background:#e0e0e0;"></div>
<svg class="a" style="left:90.8px;top:448px;" width="6" height="10" viewBox="0 0 6 10"><path d="M0.3 0.3L5.5 5L0.3 9.7Z" fill="#4a4a4a"/></svg>
<svg class="a" style="left:103.5px;top:446px;" width="15" height="12" viewBox="0 0 15 12"><rect x="0.8" y="0.8" width="13.4" height="10.6" rx="1" fill="#0b88d2"/><rect x="2.2" y="3.2" width="4.6" height="2.8" fill="#5fc4ec"/><rect x="8.2" y="3.2" width="4.6" height="2.8" fill="#5fc4ec"/><rect x="2.2" y="7.2" width="4.6" height="2.8" fill="#ffffff"/><rect x="8.2" y="7.2" width="4.6" height="2.8" fill="#ffffff"/></svg>
<div class="a" style="left:335px;top:445px;width:1.5px;height:17px;background:#e0e0e0;"></div>
<svg class="a" style="left:73px;top:471px;" width="6" height="10" viewBox="0 0 6 10"><path d="M0.3 0.3L5.5 5L0.3 9.7Z" fill="#4a4a4a"/></svg>
<svg class="a" style="left:85.5px;top:468.5px;" width="15" height="13" viewBox="0 0 15 13"><path d="M0.5 1.5H5.5L6.5 0.5H14.5V12.5H0.5Z" fill="#ef8519"/><ellipse cx="7.5" cy="7" rx="4.6" ry="2.6" fill="none" stroke="#fff" stroke-width="1.1"/><circle cx="7.5" cy="7" r="1.2" fill="#fff"/></svg>
<svg class="a" style="left:73px;top:494px;" width="6" height="10" viewBox="0 0 6 10"><path d="M0.3 0.3L5.5 5L0.3 9.7Z" fill="#4a4a4a"/></svg>
<svg class="a" style="left:85.5px;top:491.5px;" width="15" height="13" viewBox="0 0 15 13"><path d="M0.5 1H5.5L7 2.5H14.5V12.5H0.5Z" fill="#ef8519"/></svg>
<svg class="a" style="left:73px;top:517px;" width="6" height="10" viewBox="0 0 6 10"><path d="M0.3 0.3L5.5 5L0.3 9.7Z" fill="#4a4a4a"/></svg>
<svg class="a" style="left:85.5px;top:514.5px;" width="15" height="13" viewBox="0 0 15 13"><path d="M0.5 1H5.5L7 2.5H14.5V12.5H0.5Z" fill="#ef8519"/></svg>
<svg class="a" style="left:73px;top:540px;" width="6" height="10" viewBox="0 0 6 10"><path d="M0.3 0.3L5.5 5L0.3 9.7Z" fill="#4a4a4a"/></svg>
<svg class="a" style="left:85.5px;top:537.5px;" width="15" height="13" viewBox="0 0 15 13"><path d="M0.5 1H5.5L7 2.5H14.5V12.5H0.5Z" fill="#ef8519"/></svg>
<svg class="a" style="left:349px;top:150px;" width="14" height="11" viewBox="0 0 14 11"><rect x="0.7" y="0.7" width="12.6" height="9.6" rx="1.2" fill="#0b88d2"/><rect x="2" y="3" width="4.5" height="2.4" fill="#5fc4ec"/><rect x="7.5" y="3" width="4.5" height="2.4" fill="#5fc4ec"/><rect x="2" y="6.4" width="4.5" height="2.6" fill="#ffffff"/><rect x="7.5" y="6.4" width="4.5" height="2.6" fill="#ffffff"/></svg>
<svg class="a" style="left:417.5px;top:150.5px;" width="11" height="11" viewBox="0 0 11 11"><path d="M2 2L9 9M9 2L2 9" stroke="#1a1a1a" stroke-width="3.9" stroke-linecap="round"/><path d="M2 2L9 9M9 2L2 9" stroke="#fff" stroke-width="1.9" stroke-linecap="round"/></svg>
<div class="a" style="left:1057px;top:150px;width:11px;height:4px;background:transparent;border:1px solid #555;box-sizing:border-box;"></div>
<div class="a" style="left:1084px;top:149px;width:11px;height:11px;background:transparent;border:1px solid #555;border-top:2px solid #555;box-sizing:border-box;"></div>
<svg class="a" style="left:349px;top:183px;" width="14" height="11" viewBox="0 0 14 11"><rect x="0.7" y="0.7" width="12.6" height="9.6" rx="1.2" fill="#0b88d2"/><rect x="2" y="3" width="4.5" height="2.4" fill="#5fc4ec"/><rect x="7.5" y="3" width="4.5" height="2.4" fill="#5fc4ec"/><rect x="2" y="6.4" width="4.5" height="2.6" fill="#e3dfdb"/><rect x="7.5" y="6.4" width="4.5" height="2.6" fill="#e3dfdb"/></svg>
<svg class="a" style="left:448.5px;top:182.5px;" width="16" height="15" viewBox="0 0 16 15"><rect x="1.6" y="4" width="3" height="3.3" fill="#5fc4ec"/><rect x="1.6" y="8.2" width="3" height="3.6" fill="#5fc4ec"/><g fill="none" stroke="#0b88d2" stroke-width="1.3"><path d="M1 12.5V1.5H13.6V8"/><path d="M5 2.5V12.5M1 7.7H5M1 12.5H5"/><path d="M8.8 9L7 11L8.8 13M12 9L13.8 11L12 13"/></g><rect x="1" y="1" width="12.6" height="2.3" fill="#0b88d2"/></svg>
<svg class="a" style="left:507.5px;top:180.5px;" width="17" height="17" viewBox="0 0 17 17"><g fill="none" stroke="#0b88d2" stroke-width="1.2"><rect x="7" y="0.8" width="3" height="4.6"/><path d="M8.5 5.5V8.2M2.6 10.5V8.2H14.4V10.5M8.5 8.2V10.5"/><rect x="0.8" y="10.6" width="3.8" height="5.4"/><rect x="6.6" y="10.6" width="3.8" height="5.4"/><rect x="12.4" y="10.6" width="3.8" height="5.4"/></g><rect x="7" y="0.8" width="3" height="2" fill="#0b88d2"/></svg>
<svg class="a" style="left:617px;top:181px;" width="17" height="17" viewBox="0 0 17 17"><g fill="none" stroke="#8fb1cb" stroke-width="0.9"><path d="M1 1.5C4 1 7.5 3 9 7"/><path d="M1 1.5C2 4 2.5 6.5 4.5 8"/><path d="M3.5 6.5L5.5 7.5"/></g><rect x="9" y="8" width="7.5" height="8" fill="#1ea345"/><path d="M10.8 12L12.5 13.8L15 10" fill="none" stroke="#fff" stroke-width="1.3"/></svg>
<svg class="a" style="left:705px;top:181px;" width="15" height="13" viewBox="0 0 15 13"><path d="M0.5 1.5H6L7 0.5H14.5V12.5H0.5Z" fill="#ef8519"/><g fill="#fff"><rect x="2.2" y="4" width="10.6" height="1.3"/><rect x="2.2" y="7" width="2.2" height="4"/><rect x="6.4" y="7" width="2.2" height="4"/><rect x="10.6" y="7" width="2.2" height="4"/></g></svg>
<svg class="a" style="left:817px;top:186px;" width="10" height="5" viewBox="0 0 10 5"><path d="M0 0H10L5.0 5Z" fill="#333333"/></svg>
<svg class="a" style="left:835px;top:181px;" width="14" height="15" viewBox="0 0 14 15"><g fill="#0b88d2"><ellipse cx="6.8" cy="2.6" rx="6.3" ry="2.4"/><path d="M0.5 4.8C2 7.6 11.6 7.6 13.1 4.8V7.2C11.6 10 2 10 0.5 7.2Z"/><path d="M0.5 9C2 11.8 11.6 11.8 13.1 9V11.8C11.6 14.6 2 14.6 0.5 11.8Z"/></g></svg>
<svg class="a" style="left:921.5px;top:181.5px;" width="15" height="13" viewBox="0 0 15 13"><g fill="none" stroke="#ef8519" stroke-width="1.6"><path d="M0.8 12.2V1H5.5L6.5 1.8H14V12.2Z"/><path d="M0.8 5.5H14M0.8 9H14M4.5 2.5V12"/></g></svg>
<svg class="a" style="left:1006px;top:186px;" width="10" height="5" viewBox="0 0 10 5"><path d="M0 0H10L5.0 5Z" fill="#333333"/></svg>
<svg class="a" style="left:1022.5px;top:183px;" width="14" height="11" viewBox="0 0 14 11"><rect x="0.7" y="0.7" width="12.6" height="9.6" rx="1.2" fill="#0b88d2"/><rect x="2" y="3" width="4.5" height="2.4" fill="#5fc4ec"/><rect x="7.5" y="3" width="4.5" height="2.4" fill="#5fc4ec"/><rect x="2" y="6.4" width="4.5" height="2.6" fill="#e3dfdb"/><rect x="7.5" y="6.4" width="4.5" height="2.6" fill="#e3dfdb"/></svg>
<svg class="a" style="left:351px;top:219px;" width="14" height="11" viewBox="0 0 14 11"><rect x="0.7" y="0.7" width="12.6" height="9.6" rx="1.2" fill="#0b88d2"/><rect x="2" y="3" width="4.5" height="2.4" fill="#5fc4ec"/><rect x="7.5" y="3" width="4.5" height="2.4" fill="#5fc4ec"/><rect x="2" y="6.4" width="4.5" height="2.6" fill="#ffffff"/><rect x="7.5" y="6.4" width="4.5" height="2.6" fill="#ffffff"/></svg>
<svg class="a" style="left:421.5px;top:217px;" width="16" height="15" viewBox="0 0 16 15"><g fill="none" stroke="#707070" stroke-width="1.6"><path d="M1 5V1H5M1 1L5 5M15 5V1H11M15 1L11 5M1 10V14H5M1 14L5 10M15 10V14H11M15 14L11 10"/></g></svg>
<svg class="a" style="left:801.5px;top:219px;" width="7" height="12" viewBox="0 0 7 12"><path d="M0.5 0.5L6.5 6L0.5 11.5Z" fill="#777"/></svg>
<svg class="a" style="left:824px;top:222px;" width="10" height="5" viewBox="0 0 10 5"><path d="M0 0H10L5.0 5Z" fill="#777"/></svg>
<svg class="a" style="left:854px;top:216px;" width="16" height="16" viewBox="0 0 16 16"><path d="M1.5 10.5L8 2.8Q9 1.8 10 2.8L13.5 6.2Q14.4 7.2 13.5 8.2L7.2 14.5H4.6Z" fill="#c2c2c2"/><path d="M2.8 10.6L5.6 7.3L9.3 11L6.6 13.6H4.8Z" fill="#f4f4f4" stroke="#c2c2c2" stroke-width="0.9"/><path d="M9.5 14.6H14.8" stroke="#9c9c9c" stroke-width="1.1"/></svg>
<svg class="a" style="left:880.5px;top:216.5px;" width="16" height="14" viewBox="0 0 16 14"><path d="M1 1H12.5L8.3 5.5V12.5L5.3 9.5V5.5Z" fill="#5fc4ec" stroke="#0b88d2" stroke-width="1.4" stroke-linejoin="round"/><rect x="10.3" y="8.5" width="5" height="5" fill="#18a33c"/><rect x="11.6" y="9.8" width="2.4" height="2.4" fill="#fff"/></svg>
<svg class="a" style="left:908px;top:216.5px;" width="17" height="16" viewBox="0 0 17 16"><g fill="none" stroke="#0b88d2" stroke-width="1.3"><path d="M8.5 13.5H1V1H13.5V7"/><path d="M1 4.5H13.5M5 1.5V13.5M1 8.5H5"/></g><rect x="1" y="1" width="12.5" height="2.2" fill="#0b88d2"/><rect x="1.6" y="4.6" width="3" height="3.4" fill="#5fc4ec"/><rect x="1.6" y="8.8" width="3" height="4" fill="#5fc4ec"/><circle cx="12.5" cy="12" r="2.5" fill="#0b88d2"/><path d="M12.5 8.3V15.7M8.8 12H16.2M9.9 9.4L15.1 14.6M15.1 9.4L9.9 14.6" stroke="#0b88d2" stroke-width="1.3"/><circle cx="12.5" cy="12" r="1" fill="#fff"/></svg>
<svg class="a" style="left:931px;top:217px;" width="2" height="18" viewBox="0 0 2 18"><rect x="0" y="2" width="2" height="2" fill="#aaa49e"/><rect x="0" y="6" width="2" height="2" fill="#aaa49e"/><rect x="0" y="10" width="2" height="2" fill="#aaa49e"/><rect x="0" y="14" width="2" height="2" fill="#aaa49e"/></svg>
<div class="a" style="left:936px;top:206px;width:1px;height:34px;background:#cdc8c3;"></div>
<svg class="a" style="left:949px;top:215px;" width="16" height="16" viewBox="0 0 16 16"><g fill="none" stroke="#0b88d2" stroke-width="1.7"><path d="M2.5 9.5A5.6 5.6 0 0 1 10.5 2.8"/><path d="M13.5 6.5A5.6 5.6 0 0 1 5.5 13.2"/><path d="M5 8.8L7.3 6.4L9 8.2L11.2 5.8" stroke-width="1.4"/></g><path d="M9.2 0.2L13.6 3.2L9.2 6Z M6.8 16L2.4 12.8L6.8 10Z" fill="#0b88d2"/></svg>
<svg class="a" style="left:974px;top:222px;" width="10" height="5" viewBox="0 0 10 5"><path d="M0 0H10L5.0 5Z" fill="#333333"/></svg>
<svg class="a" style="left:990px;top:217px;" width="2" height="18" viewBox="0 0 2 18"><rect x="0" y="2" width="2" height="2" fill="#aaa49e"/><rect x="0" y="6" width="2" height="2" fill="#aaa49e"/><rect x="0" y="10" width="2" height="2" fill="#aaa49e"/><rect x="0" y="14" width="2" height="2" fill="#aaa49e"/></svg>
<div class="a" style="left:995px;top:206px;width:1px;height:34px;background:#cdc8c3;"></div>
<svg class="a" style="left:1009px;top:219px;" width="15" height="11" viewBox="0 0 15 11"><path d="M0.5 5.5L5.5 0.5V3.5H14.5V7.5H5.5V10.5Z" fill="#a8a8a8"/></svg>
<svg class="a" style="left:1033px;top:222px;" width="10" height="5" viewBox="0 0 10 5"><path d="M0 0H10L5.0 5Z" fill="#a8a8a8"/></svg>
<svg class="a" style="left:1053.5px;top:219px;" width="15" height="11" viewBox="0 0 15 11"><path d="M14.5 5.5L9.5 0.5V3.5H0.5V7.5H9.5V10.5Z" fill="#a8a8a8"/></svg>
<svg class="a" style="left:1078px;top:222px;" width="10" height="5" viewBox="0 0 10 5"><path d="M0 0H10L5.0 5Z" fill="#a8a8a8"/></svg>
<svg class="a" style="left:407px;top:255px;" width="17" height="12" viewBox="0 0 17 12"><text x="0" y="7.2" font-family="Liberation Sans" font-weight="bold" font-size="9" fill="#0b88d2" textLength="15" lengthAdjust="spacingAndGlyphs" stroke="#0b88d2" stroke-width="0.3">ABC</text><rect x="8.5" y="5" width="7.5" height="6.5" fill="#0b88d2" stroke="#f2a68c" stroke-width="0.8"/><circle cx="12.2" cy="7.4" r="1.4" fill="none" stroke="#fff" stroke-width="0.9"/><path d="M12.2 8.8V10.8" stroke="#fff" stroke-width="0.9"/></svg>
<svg class="a" style="left:477px;top:252px;" width="17" height="15" viewBox="0 0 17 15"><path d="M0.8 0.8H9L6.3 3.8V13.5L3.5 10.5V3.8Z" fill="#86c8ec" stroke="#0b88d2" stroke-width="1.1" stroke-linejoin="round"/><path d="M13.2 2.5V12.5" stroke="#0b88d2" stroke-width="1.4"/><path d="M10.5 4.5L13.2 1L15.9 4.5ZM10.5 10.5L13.2 14L15.9 10.5Z" fill="#0b88d2"/></svg>
<svg class="a" style="left:503px;top:255px;" width="17" height="8" viewBox="0 0 17 8"><text x="0" y="7.6" font-family="Liberation Sans" font-weight="bold" font-size="9.6" fill="#0b88d2" textLength="16" lengthAdjust="spacingAndGlyphs" stroke="#0b88d2" stroke-width="0.4">ABC</text></svg>
<svg class="a" style="left:687px;top:252px;" width="17" height="15" viewBox="0 0 17 15"><path d="M0.8 0.8H9L6.3 3.8V13.5L3.5 10.5V3.8Z" fill="#86c8ec" stroke="#0b88d2" stroke-width="1.1" stroke-linejoin="round"/><path d="M13.2 2.5V12.5" stroke="#0b88d2" stroke-width="1.4"/><path d="M10.5 4.5L13.2 1L15.9 4.5ZM10.5 10.5L13.2 14L15.9 10.5Z" fill="#0b88d2"/></svg>
<svg class="a" style="left:712.5px;top:254px;" width="17" height="9" viewBox="0 0 17 9"><text x="0" y="8.2" font-family="Liberation Sans" font-size="10.5" fill="#0b88d2" textLength="16.5" lengthAdjust="spacingAndGlyphs">123</text></svg>
<svg class="a" style="left:774px;top:252px;" width="17" height="15" viewBox="0 0 17 15"><path d="M0.8 0.8H9L6.3 3.8V13.5L3.5 10.5V3.8Z" fill="#86c8ec" stroke="#0b88d2" stroke-width="1.1" stroke-linejoin="round"/><path d="M13.2 2.5V12.5" stroke="#0b88d2" stroke-width="1.4"/><path d="M10.5 4.5L13.2 1L15.9 4.5ZM10.5 10.5L13.2 14L15.9 10.5Z" fill="#0b88d2"/></svg>
<svg class="a" style="left:800px;top:254px;" width="17" height="9" viewBox="0 0 17 9"><text x="0" y="8.2" font-family="Liberation Sans" font-size="10.5" fill="#0b88d2" textLength="16.5" lengthAdjust="spacingAndGlyphs">123</text></svg>
<svg class="a" style="left:867px;top:252px;" width="17" height="15" viewBox="0 0 17 15"><path d="M0.8 0.8H9L6.3 3.8V13.5L3.5 10.5V3.8Z" fill="#86c8ec" stroke="#0b88d2" stroke-width="1.1" stroke-linejoin="round"/><path d="M13.2 2.5V12.5" stroke="#0b88d2" stroke-width="1.4"/><path d="M10.5 4.5L13.2 1L15.9 4.5ZM10.5 10.5L13.2 14L15.9 10.5Z" fill="#0b88d2"/></svg>
<svg class="a" style="left:893px;top:254px;" width="17" height="9" viewBox="0 0 17 9"><text x="0" y="8.2" font-family="Liberation Sans" font-size="10.5" fill="#0b88d2" textLength="16.5" lengthAdjust="spacingAndGlyphs">123</text></svg>
<svg class="a" style="left:991.5px;top:252px;" width="17" height="15" viewBox="0 0 17 15"><path d="M0.8 0.8H9L6.3 3.8V13.5L3.5 10.5V3.8Z" fill="#86c8ec" stroke="#0b88d2" stroke-width="1.1" stroke-linejoin="round"/><path d="M13.2 2.5V12.5" stroke="#0b88d2" stroke-width="1.4"/><path d="M10.5 4.5L13.2 1L15.9 4.5ZM10.5 10.5L13.2 14L15.9 10.5Z" fill="#0b88d2"/></svg>
<svg class="a" style="left:349px;top:289px;" width="14" height="14" viewBox="0 0 14 14"><rect x="0.5" y="0.5" width="13" height="13" fill="#e6f3fa" stroke="#0b88d2" stroke-width="1"/><path d="M4.5 0.5V13.5M9.5 0.5V13.5M0.5 4.5H13.5M0.5 9.5H13.5" stroke="#0b88d2" stroke-width="1"/></svg>
<svg class="a" style="left:350px;top:354px;" width="13" height="16" viewBox="0 0 13 16"><g fill="none" stroke="#0b88d2" stroke-width="1.3"><path d="M1 3.5H12M1 1.2V5.8M12 1.2V5.8M6.5 3.5V9"/><path d="M3.5 11L6.5 8.5L9.5 11M3.5 13L6.5 15.5L9.5 13"/></g></svg>
<svg class="a" style="left:348px;top:619px;" width="17" height="17" viewBox="0 0 17 17"><path d="M1.2 15.2V8L4.5 4.5H14.5V15.2Z" fill="#fff" stroke="#0b88d2" stroke-width="1.4"/><circle cx="13" cy="4.3" r="3.6" fill="#0b88d2" stroke="#e3dfdb" stroke-width="0.8"/><path d="M11.2 4.3H14.8" stroke="#fff" stroke-width="1.2"/></svg>
<svg class="a" style="left:1089px;top:253.5px;" width="16" height="15" viewBox="0 0 16 15"><rect x="0.8" y="0.8" width="14.2" height="13.4" fill="#fff" stroke="#0b88d2" stroke-width="1.5"/><rect x="7" y="1.5" width="7.3" height="7.5" fill="#5fc4ec"/><path d="M7 1V14" stroke="#0b88d2" stroke-width="1.3"/><circle cx="3.5" cy="11.5" r="2.8" fill="#0b88d2"/><circle cx="3.5" cy="11.5" r="1" fill="#fff"/></svg>
<svg class="a" style="left:1088px;top:332px;" width="14" height="14" viewBox="0 0 14 14"><circle cx="3.4" cy="3.4" r="3" fill="#0b88d2"/><circle cx="10.6" cy="3.4" r="3" fill="#0b88d2"/><circle cx="3.4" cy="10.6" r="3" fill="#0b88d2"/><circle cx="10.6" cy="10.6" r="3" fill="#ef8519"/><path d="M1.8 3.4H5M9 3.4H12.2M10.6 1.8V5M2.2 9.4L4.6 11.8M4.6 9.4L2.2 11.8M9 9.9H12.2M9 11.3H12.2" stroke="#fff" stroke-width="0.9"/></svg>
<svg class="a" style="left:1088px;top:353.5px;" width="15" height="15" viewBox="0 0 15 15"><circle cx="7.5" cy="7.5" r="6.6" fill="none" stroke="#0b88d2" stroke-width="1.3"/><g fill="#0b88d2"><rect x="4.5" y="4.5" width="2" height="2"/><rect x="8.5" y="4.5" width="2" height="2"/><rect x="4.5" y="8.5" width="2" height="2"/><rect x="8.5" y="8.5" width="2" height="2"/></g></svg>
<svg class="a" style="left:1088px;top:376px;" width="14" height="14" viewBox="0 0 14 14"><rect x="0.6" y="0.6" width="12.8" height="12.8" fill="#fff" stroke="#0b88d2" stroke-width="1.2"/><g fill="#0b88d2"><rect x="1" y="1" width="3" height="2.5"/><rect x="7" y="1" width="3" height="2.5"/><rect x="4" y="3.5" width="3" height="2.5"/><rect x="10" y="3.5" width="3" height="2.5"/><rect x="1" y="6" width="3" height="2.5"/><rect x="7" y="6" width="3" height="2.5"/><rect x="1" y="11" width="12" height="2.4"/></g><g fill="#5fc4ec"><rect x="4" y="1" width="3" height="2.5"/><rect x="1" y="3.5" width="3" height="2.5"/><rect x="7" y="3.5" width="3" height="2.5"/><rect x="4" y="6" width="3" height="2.5"/><rect x="10" y="6" width="3" height="2.5"/></g></svg>
<svg class="a" style="left:1088px;top:396.5px;" width="15" height="16" viewBox="0 0 15 16"><rect x="0.7" y="4.7" width="13.6" height="10.6" rx="1" fill="#fff" stroke="#0b88d2" stroke-width="1.4"/><path d="M0.7 8H14.3M0.7 11.5H14.3M10 4.7V15.3" stroke="#0b88d2" stroke-width="1.1"/><rect x="4.5" y="4.7" width="3" height="10.6" fill="#fff" stroke="#ef8519" stroke-width="1.2"/><path d="M6 0V3.5M4.3 1.8H7.7" stroke="#ef8519" stroke-width="1.2"/></svg>
<svg class="a" style="left:1088px;top:420px;" width="15" height="14" viewBox="0 0 15 14"><rect x="0.7" y="0.7" width="13.6" height="12.6" fill="#fff" stroke="#0b88d2" stroke-width="1.4"/><rect x="1.5" y="2.8" width="7" height="4.5" fill="#5fc4ec"/><rect x="0.7" y="0.7" width="13.6" height="2" fill="#0b88d2"/><path d="M0.7 8H8.5M8.5 2.7V13.3" stroke="#0b88d2" stroke-width="1.2"/><path d="M8 11.5H14.5M8 9.5V13.5M14.5 9.5V13.5" stroke="#0b88d2" stroke-width="1.1"/></svg>
<svg class="a" style="left:1087px;top:727px;" width="17" height="17" viewBox="0 0 17 17"><rect x="1" y="2.8" width="4" height="13.5" rx="2" fill="#0b88d2"/><rect x="6.5" y="12.8" width="8.5" height="3.5" rx="1.6" fill="#0b88d2"/><path d="M13.8 11.5C13.8 8 12 5.8 9 5.8" fill="none" stroke="#0b88d2" stroke-width="1.8"/><path d="M6 5.8L9.6 2.4V9.2Z" fill="#0b88d2"/></svg>
<svg class="a" style="left:378px;top:652px;" width="15" height="15" viewBox="0 0 15 15"><circle cx="7.2" cy="7" r="6.2" fill="none" stroke="#18a33c" stroke-width="1.5"/><path d="M4 7.2L6.4 9.5L10.5 5" fill="none" stroke="#18a33c" stroke-width="1.5"/></svg>
<svg class="a" style="left:447.5px;top:652.5px;" width="13" height="13" viewBox="0 0 13 13"><rect x="0.7" y="0.7" width="11.4" height="11" fill="#f6a3a0" stroke="#e5352a" stroke-width="1.3"/><path d="M3.5 3.4L9.3 9M9.3 3.4L3.5 9" stroke="#e5352a" stroke-width="1"/></svg>
<svg class="a" style="left:529px;top:651px;" width="17" height="16" viewBox="0 0 17 16"><path d="M3 0.9H15.3L12.8 3V12.9L12.2 14.9H1L3 12.9Z" fill="#0b88d2"/><circle cx="8.2" cy="9.8" r="2.7" fill="none" stroke="#e8f3fa" stroke-width="0.9"/><path d="M10.2 11.8L11.9 13.5" stroke="#e8f3fa" stroke-width="1"/></svg>
<svg class="a" style="left:626.5px;top:652px;" width="17" height="16" viewBox="0 0 17 16"><g fill="#0b88d2"><rect x="0.2" y="1.2" width="14.2" height="1.7"/><rect x="0.2" y="6.2" width="9.2" height="1.7"/><rect x="0.2" y="11.2" width="6" height="1.7"/></g><path d="M8.3 14L15 7.5" stroke="#0b88d2" stroke-width="2" stroke-linecap="round"/></svg>
<svg class="a" style="left:654px;top:652px;" width="17" height="16" viewBox="0 0 17 16"><g fill="#0b88d2"><rect x="0" y="1.2" width="13.8" height="1.7"/><rect x="0" y="6.2" width="5.6" height="1.7"/><rect x="0" y="11.2" width="5.6" height="1.7"/></g><path d="M6.9 10.3H15.1M11 6.2V14.4" stroke="#18a33c" stroke-width="2.1"/></svg>
<svg class="a" style="left:681px;top:652px;" width="17" height="16" viewBox="0 0 17 16"><g fill="#0b88d2"><rect x="0" y="1.2" width="13.6" height="1.7"/><rect x="0" y="6.2" width="2.7" height="1.7"/><rect x="0" y="11.2" width="2.7" height="1.7"/></g><path d="M6 5.8C4.8 7.3 4.8 12.2 6 13.8M12.5 5.8C13.7 7.3 13.7 12.2 12.5 13.8" fill="none" stroke="#0b88d2" stroke-width="1.3"/><path d="M7.2 9.7H11.4M9.3 7.6V11.8" stroke="#18a33c" stroke-width="1.2"/></svg>
<svg class="a" style="left:707.9px;top:652px;" width="17" height="16" viewBox="0 0 17 16"><g fill="#0b88d2"><rect x="0" y="1.2" width="14.1" height="1.7"/><rect x="0" y="6.2" width="5.9" height="1.7"/><rect x="0" y="11.2" width="5.9" height="1.7"/></g><rect x="7.3" y="9" width="7.7" height="1.9" fill="#ee2a1b"/></svg>
<svg class="a" style="left:765.5px;top:652px;" width="15" height="15" viewBox="0 0 15 15"><rect x="4.5" y="4" width="9.8" height="7.5" fill="#5fc4ec" stroke="#0b88d2" stroke-width="1.3"/><path d="M1.5 3.5V11.5M4.3 1V14.3M2 1H6.5M2 14.3H6.5" fill="none" stroke="#0b88d2" stroke-width="1.3"/></svg>
<svg class="a" style="left:377px;top:687px;" width="2" height="18" viewBox="0 0 2 18"><rect x="0" y="2" width="2" height="2" fill="#b3aba2"/><rect x="0" y="6" width="2" height="2" fill="#b3aba2"/><rect x="0" y="10" width="2" height="2" fill="#b3aba2"/><rect x="0" y="14" width="2" height="2" fill="#b3aba2"/></svg>
<div class="a" style="left:397px;top:687px;width:2.3px;height:14px;background:#0b88d2;"></div>
<svg class="a" style="left:400.5px;top:687px;" width="8" height="14" viewBox="0 0 8 14"><path d="M7 0.5L1.5 7L7 13.5" fill="none" stroke="#0b88d2" stroke-width="1.9"/></svg>
<svg class="a" style="left:425.5px;top:687px;" width="8" height="14" viewBox="0 0 8 14"><path d="M7 0.5L1.5 7L7 13.5" fill="none" stroke="#0b88d2" stroke-width="1.9"/></svg>
<svg class="a" style="left:454.5px;top:687px;" width="8" height="14" viewBox="0 0 8 14"><path d="M1 0.5L6.5 7L1 13.5" fill="none" stroke="#0b88d2" stroke-width="1.9"/></svg>
<svg class="a" style="left:478.5px;top:687px;" width="8" height="14" viewBox="0 0 8 14"><path d="M1 0.5L6.5 7L1 13.5" fill="none" stroke="#0b88d2" stroke-width="1.9"/></svg>
<div class="a" style="left:488px;top:687px;width:2.3px;height:14px;background:#0b88d2;"></div>
<svg class="a" style="left:517px;top:687px;" width="16" height="15" viewBox="0 0 16 15"><path d="M1 5V11H7M5 8.5L7.5 11L5 13.5" fill="none" stroke="#0b88d2" stroke-width="1.1"/><path d="M9 0.5H13L14.5 2V8.5H9Z" fill="#5fc4ec" stroke="#0b88d2" stroke-width="1.1"/></svg>
<svg class="a" style="left:544.5px;top:687px;" width="15" height="15" viewBox="0 0 15 15"><g fill="none" stroke="#0b88d2" stroke-width="1.3"><path d="M0.7 3.5V0.7H3.5M11.5 0.7H14.3V3.5M14.3 11.5V14.3H11.5M3.5 14.3H0.7V11.5"/></g><path d="M5 3.5H8.8L10 4.7V11.2H5Z" fill="#5fc4ec" stroke="#0b88d2" stroke-width="1.2"/></svg>
<svg class="a" style="left:577px;top:687px;" width="2" height="18" viewBox="0 0 2 18"><rect x="0" y="2" width="2" height="2" fill="#aaa49e"/><rect x="0" y="6" width="2" height="2" fill="#aaa49e"/><rect x="0" y="10" width="2" height="2" fill="#aaa49e"/><rect x="0" y="14" width="2" height="2" fill="#aaa49e"/></svg>
<svg class="a" style="left:606.5px;top:686.5px;" width="13" height="15" viewBox="0 0 13 15"><path d="M6.5 1V9.5" stroke="#0b88d2" stroke-width="1.8"/><path d="M2.5 4.8L6.5 0.5L10.5 4.8Z" fill="#0b88d2"/><path d="M1 8.5V13.8H12V8.5" fill="none" stroke="#0b88d2" stroke-width="1.5"/></svg>
<svg class="a" style="left:638px;top:687px;" width="2" height="18" viewBox="0 0 2 18"><rect x="0" y="2" width="2" height="2" fill="#aaa49e"/><rect x="0" y="6" width="2" height="2" fill="#aaa49e"/><rect x="0" y="10" width="2" height="2" fill="#aaa49e"/><rect x="0" y="14" width="2" height="2" fill="#aaa49e"/></svg>
<svg class="a" style="left:656.5px;top:686.5px;" width="15" height="15" viewBox="0 0 15 15"><path d="M6 0.5H9L9.5 2.5L11.5 3.3L13.2 2.1L14.9 3.8L13.7 5.5L14.5 7.5L16 8V9L14.5 9.5L13.7 11.5L14.9 13.2L13.2 14.9L11.5 13.7L9.5 14.5L9 16H6L5.5 14.5L3.5 13.7L1.8 14.9L0.1 13.2L1.3 11.5L0.5 9.5L-1 9V6L0.5 5.5L1.3 3.5L0.1 1.8L1.8 0.1L3.5 1.3L5.5 0.5Z" transform="translate(0.5 -0.3) scale(0.92)" fill="#0b88d2"/><circle cx="7.5" cy="7.5" r="2.8" fill="#8fd3f2"/></svg>
<svg class="a" style="left:458px;top:721px;" width="17" height="17" viewBox="0 0 17 17"><g fill="none" stroke="#18a33c" stroke-width="1.9"><path d="M2 10V7.5Q2 5 4.5 5H11.5"/><path d="M14.5 7V9.5Q14.5 12 12 12H5"/></g><path d="M10.5 1.8L14.6 5L10.5 8.2Z M6 8.8L1.9 12L6 15.2Z" fill="#18a33c"/></svg>
<svg class="a" style="left:525px;top:722px;" width="2" height="18" viewBox="0 0 2 18"><rect x="0" y="2" width="2" height="2" fill="#aaa49e"/><rect x="0" y="6" width="2" height="2" fill="#aaa49e"/><rect x="0" y="10" width="2" height="2" fill="#aaa49e"/><rect x="0" y="14" width="2" height="2" fill="#aaa49e"/></svg>
<svg class="a" style="left:15.5px;top:576.5px;" width="15" height="15" viewBox="0 0 15 15"><rect x="0.8" y="0.8" width="13.4" height="13.4" rx="1" fill="#5fc4ec" stroke="#0b88d2" stroke-width="1.5"/><rect x="0.8" y="0.8" width="13.4" height="2.5" fill="#0b88d2"/></svg>
<svg class="a" style="left:153px;top:578.5px;" width="11" height="11" viewBox="0 0 11 11"><path d="M2 2L9 9M9 2L2 9" stroke="#1a1a1a" stroke-width="3.9" stroke-linecap="round"/><path d="M2 2L9 9M9 2L2 9" stroke="#fff" stroke-width="1.9" stroke-linecap="round"/></svg>
<div class="a" style="left:285px;top:578px;width:11px;height:4px;background:transparent;border:1px solid #555;box-sizing:border-box;"></div>
<div class="a" style="left:312px;top:577px;width:11px;height:11px;background:transparent;border:1px solid #555;border-top:2px solid #555;box-sizing:border-box;"></div>
<svg class="a" style="left:233px;top:608px;" width="15" height="15" viewBox="0 0 15 15"><path d="M6 0.5H9L9.5 2.5L11.5 3.3L13.2 2.1L14.9 3.8L13.7 5.5L14.5 7.5L16 8V9L14.5 9.5L13.7 11.5L14.9 13.2L13.2 14.9L11.5 13.7L9.5 14.5L9 16H6L5.5 14.5L3.5 13.7L1.8 14.9L0.1 13.2L1.3 11.5L0.5 9.5L-1 9V6L0.5 5.5L1.3 3.5L0.1 1.8L1.8 0.1L3.5 1.3L5.5 0.5Z" transform="translate(0.5 -0.3) scale(0.92)" fill="#0b88d2"/><circle cx="7.5" cy="7.5" r="2.8" fill="#8fd3f2"/></svg>
<svg class="a" style="left:261px;top:612px;" width="14" height="7" viewBox="0 0 14 7"><g fill="none" stroke="#0b88d2" stroke-width="1.7"><path d="M3 1.8H13.5V3"/><path d="M0.5 5H12"/></g></svg>
<svg class="a" style="left:288px;top:608px;" width="14" height="14" viewBox="0 0 14 14"><g fill="none" stroke="#0b88d2" stroke-width="1.6"><path d="M6.5 3V13M1 8.2H12.5"/><path d="M8.5 1V5.5H13"/></g></svg>
<svg class="a" style="left:313px;top:609px;" width="16" height="12" viewBox="0 0 16 12"><path d="M4 4.2H11" stroke="#0b88d2" stroke-width="1.8"/><path d="M10.5 0.5L15 4.2L10.5 8Z" fill="#0b88d2"/><path d="M12 8.2H5" stroke="#18a33c" stroke-width="1.8"/><path d="M5.5 4.5L1 8.2L5.5 12Z" fill="#18a33c"/></svg>
<svg class="a" style="left:18.8px;top:671.3px;" width="6" height="10" viewBox="0 0 6 10"><path d="M0.3 0.3L5.5 5L0.3 9.7Z" fill="#4a4a4a"/></svg>
<svg class="a" style="left:18.8px;top:694.3px;" width="6" height="10" viewBox="0 0 6 10"><path d="M0.3 0.3L5.5 5L0.3 9.7Z" fill="#4a4a4a"/></svg>
<svg class="a" style="left:18.8px;top:717.3px;" width="6" height="10" viewBox="0 0 6 10"><path d="M0.3 0.3L5.5 5L0.3 9.7Z" fill="#4a4a4a"/></svg>
<svg class="a" style="left:31px;top:667.5px;" width="16" height="15" viewBox="0 0 16 15"><path d="M0.8 12.8V1H5.5L7 2.5H14.2V8" fill="#fcc3a3" stroke="#ef8519" stroke-width="1.4"/><path d="M0.8 12.8H9" stroke="#ef8519" stroke-width="1.4"/><path d="M12 8.5L13 10.8L15.5 11L13.6 12.6L14.2 15L12 13.7L9.8 15L10.4 12.6L8.5 11L11 10.8Z" fill="#ef8519"/></svg>
<svg class="a" style="left:32px;top:691.5px;" width="14" height="12" viewBox="0 0 14 12"><path d="M0.8 11.2V1H5L6.3 2.2H13.2V11.2Z" fill="none" stroke="#ef8519" stroke-width="1.4"/><path d="M0.8 4H13.2M7 4V11.2" stroke="#ef8519" stroke-width="1.3"/><rect x="2.5" y="6.3" width="3" height="3.3" fill="#ef8519"/><rect x="8.5" y="6.3" width="3" height="3.3" fill="#ef8519"/></svg>
<svg class="a" style="left:32px;top:714.5px;" width="14" height="12" viewBox="0 0 14 12"><path d="M0.5 1.5H5L6.5 0.5H13.5V11.5H0.5Z" fill="#ef8519"/><path d="M4.5 3.5H9L8 4.5V9.5H3.5L4.5 8.5Z" fill="#fff"/><path d="M5.3 4.5V8.5" stroke="#ef8519" stroke-width="0.8"/></svg>
</body></html>
